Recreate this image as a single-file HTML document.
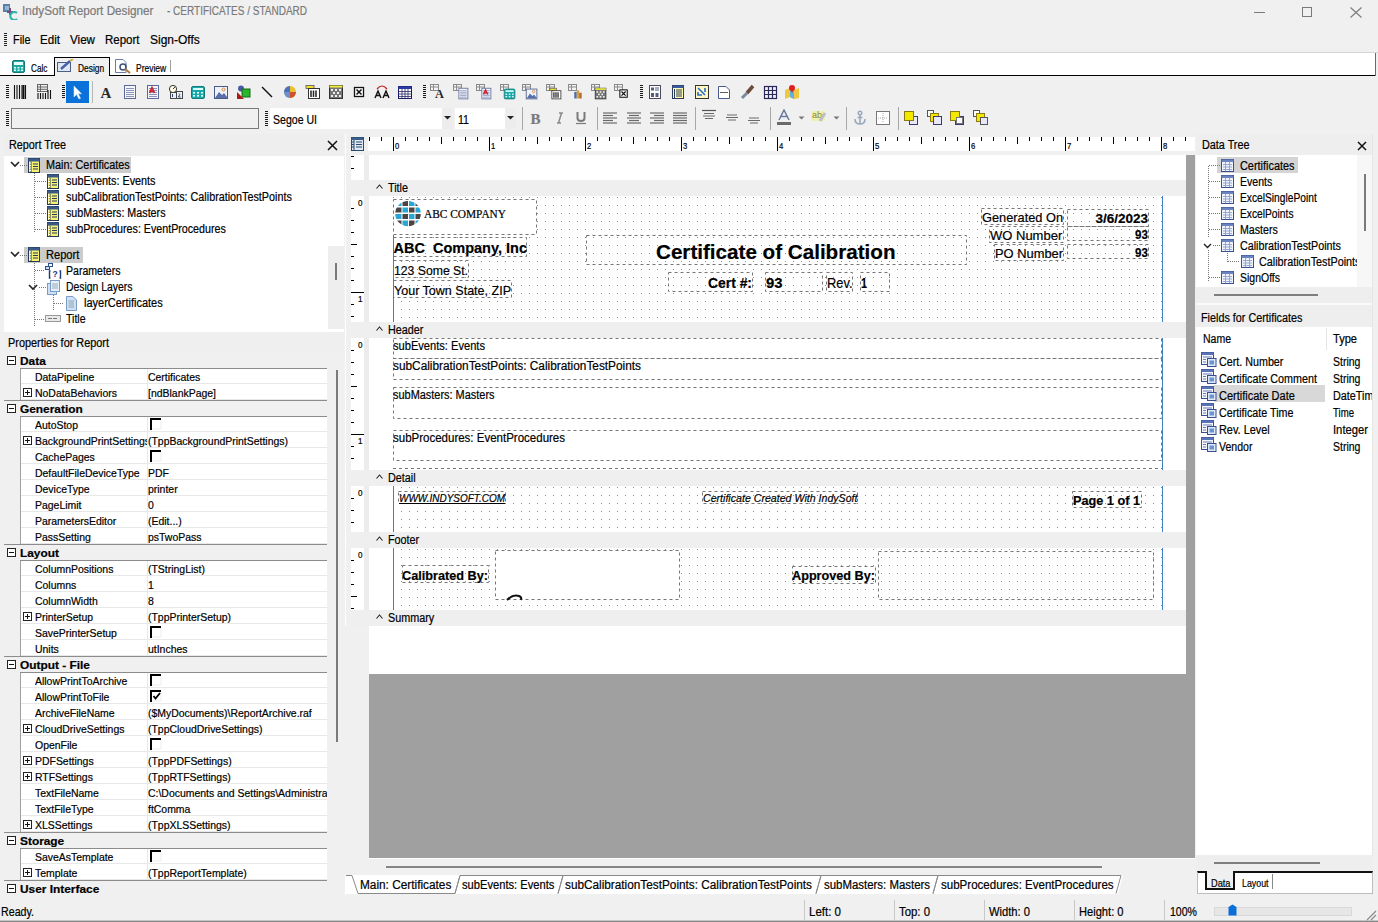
<!DOCTYPE html><html><head><meta charset="utf-8"><title>IndySoft Report Designer</title><style>*{margin:0;padding:0}
html,body{width:1378px;height:922px;overflow:hidden;background:#f0f0f0;font-family:"Liberation Sans",sans-serif;color:#000}
.a{position:absolute;display:block}
.t{position:absolute;white-space:pre;line-height:1;transform-origin:0 0;-webkit-text-stroke:0.2px currentColor}
</style></head><body>
<div class="a" style="left:0px;top:0px;width:1378px;height:30px;background:#f0f0f0;"></div>
<svg class="a" style="left:2px;top:3px;" width="16" height="17" viewBox="0 0 16 17"><rect x="1" y="1" width="7" height="8" fill="#5a7fa8"/><rect x="3" y="3" width="4" height="4" fill="#9bb4d0"/><path d="M8 5 L8 12 M5 9 L11 9" stroke="#7a4a7a" stroke-width="2"/><path d="M15 10 A4 4 0 1 0 15 16" stroke="#2bb3b0" stroke-width="2.2" fill="none"/></svg>
<div class="t" style="left:22.00px;top:5.34px;font-size:12.00px;color:#7a7a7a;transform:scaleX(0.9760);">IndySoft Report Designer</div>
<div class="t" style="left:167.00px;top:5.34px;font-size:12.00px;color:#7a7a7a;transform:scaleX(0.8333);">- CERTIFICATES / STANDARD</div>
<div class="a" style="left:1254px;top:12px;width:11px;height:1px;background:#7a7a7a;"></div>
<div class="a" style="left:1302px;top:7px;width:10px;height:10px;border:1px solid #7a7a7a;box-sizing:border-box;"></div>
<svg class="a" style="left:1350px;top:7px;" width="12" height="11" viewBox="0 0 12 11"><path d="M0.5 0.5 L11.5 10.5 M11.5 0.5 L0.5 10.5" stroke="#7a7a7a" stroke-width="1.1"/></svg>
<div class="a" style="left:4px;top:33px;width:3px;height:13px;background:repeating-linear-gradient(#222 0 1px,transparent 1px 2px);"></div>
<div class="t" style="left:12.50px;top:34.04px;font-size:12.00px;color:#000;transform:scaleX(0.9050);">File</div>
<div class="t" style="left:40.00px;top:34.04px;font-size:12.00px;color:#000;transform:scaleX(0.9672);">Edit</div>
<div class="t" style="left:70.00px;top:34.04px;font-size:12.00px;color:#000;transform:scaleX(0.9692);">View</div>
<div class="t" style="left:105.00px;top:34.04px;font-size:12.00px;color:#000;transform:scaleX(0.9579);">Report</div>
<div class="t" style="left:150.00px;top:34.04px;font-size:12.00px;color:#000;">Sign-Offs</div>
<div class="a" style="left:0px;top:52px;width:1378px;height:1px;background:#d5d5d5;"></div>
<div class="a" style="left:0px;top:53px;width:1378px;height:22px;background:#ffffff;"></div>
<div class="a" style="left:0px;top:75px;width:55px;height:1px;background:#000;"></div>
<div class="a" style="left:109px;top:75px;width:1266px;height:1px;background:#000;"></div>
<div class="a" style="left:1375px;top:53px;width:1px;height:23px;background:#6a6a6a;"></div>
<div class="a" style="left:1376px;top:53px;width:2px;height:23px;background:#f0f0f0;"></div>
<div class="a" style="left:54px;top:57px;width:56px;height:19px;background:#f0f0f0;border:1.5px solid #000;border-bottom:none;box-sizing:border-box;"></div>
<svg class="a" style="left:12px;top:60px;" width="13" height="13" viewBox="0 0 13 13"><rect x="0.5" y="0.5" width="12" height="12" rx="1.5" fill="#1fa7a2" stroke="#147a76"/><rect x="2" y="2" width="9" height="3" fill="#e8ffff"/><g fill="#e8ffff"><rect x="2" y="7" width="2" height="1.5"/><rect x="5.5" y="7" width="2" height="1.5"/><rect x="9" y="7" width="2" height="1.5"/><rect x="2" y="9.5" width="2" height="1.5"/><rect x="5.5" y="9.5" width="2" height="1.5"/><rect x="9" y="9.5" width="2" height="1.5"/></g></svg>
<div class="t" style="left:31.30px;top:62.71px;font-size:10.50px;color:#000;transform:scaleX(0.7808);">Calc</div>
<svg class="a" style="left:57px;top:59px;" width="17" height="14" viewBox="0 0 17 14"><rect x="0.5" y="3.5" width="13" height="9" fill="#dfe7f2" stroke="#4a5f86"/><path d="M4 10 L13 2" stroke="#4a60a8" stroke-width="2.5"/><path d="M13 2 L16 0" stroke="#c8b040" stroke-width="2"/></svg>
<div class="t" style="left:78.40px;top:62.71px;font-size:10.50px;color:#000;transform:scaleX(0.7985);">Design</div>
<svg class="a" style="left:115px;top:59px;" width="16" height="15" viewBox="0 0 16 15"><path d="M0.5 0.5 H8 L11 3.5 V13.5 H0.5 Z" fill="#fff" stroke="#6a7ba5"/><circle cx="8" cy="8" r="3" fill="none" stroke="#3a4f7a" stroke-width="1.5"/><path d="M10 10 L15 14" stroke="#b07a3a" stroke-width="2.2"/></svg>
<div class="t" style="left:135.80px;top:62.71px;font-size:10.50px;color:#000;transform:scaleX(0.8060);">Preview</div>
<div class="a" style="left:170px;top:60px;width:1px;height:12px;background:#a0a0a0;"></div>
<div class="a" style="left:0px;top:76px;width:1378px;height:58px;background:#f0f0f0;"></div>
<div class="a" style="left:6px;top:85px;width:3px;height:13px;background:repeating-linear-gradient(#1a1a1a 0 1px,transparent 1px 2px);"></div>
<svg class="a" style="left:13px;top:84px;" width="16" height="16" viewBox="0 0 16 16"><path d="M1.5 1 V15 M4 1 V15 M6.5 1 V15 M9 1 V15 M12.5 1 V15" stroke="#111" stroke-width="1.1"/><path d="M10.5 1 V15" stroke="#111" stroke-width="2"/></svg>
<svg class="a" style="left:37px;top:84px;" width="16" height="16" viewBox="0 0 16 16"><rect x="0.5" y="0.5" width="10" height="7" fill="none" stroke="#666"/><path d="M0.5 3 H10.5 M0.5 5.3 H10.5 M3.5 0.5 V7.5" stroke="#666"/><path d="M1 9 V15 M3.5 9 V15 M6 9 V15 M8.5 9 V15 M11 6 V15 M13.5 6 V15" stroke="#111" stroke-width="1.1"/></svg>
<div class="a" style="left:62px;top:85px;width:3px;height:13px;background:repeating-linear-gradient(#1a1a1a 0 1px,transparent 1px 2px);"></div>
<div class="a" style="left:66px;top:81px;width:23px;height:22px;background:#0a72d8;"></div>
<svg class="a" style="left:69px;top:84px;" width="16" height="16" viewBox="0 0 16 16"><path d="M5 2 L5 13 L7.5 10.5 L10 15 L11.5 14.3 L9.2 9.8 L12.5 9.8 Z" fill="#fff" stroke="#cfe3ff" stroke-width="0.6"/></svg>
<div class="a" style="left:92px;top:81px;width:1px;height:22px;background:#b8b8b8;"></div>
<svg class="a" style="left:98px;top:84px;" width="16" height="16" viewBox="0 0 16 16"><text x="8" y="13.5" text-anchor="middle" font-family="Liberation Serif" font-weight="bold" font-size="15" fill="#2a2a2a">A</text></svg>
<svg class="a" style="left:121px;top:84px;" width="16" height="16" viewBox="0 0 16 16"><rect x="3.5" y="1.5" width="11" height="13" fill="#f4f6fb" stroke="#5a6a9a"/><path d="M5 4.5 H13 M5 6.5 H13 M5 8.5 H13 M5 10.5 H13 M5 12.5 H13" stroke="#8a94b8"/></svg>
<svg class="a" style="left:144px;top:84px;" width="16" height="16" viewBox="0 0 16 16"><rect x="3.5" y="1.5" width="11" height="13" fill="#f4f6fb" stroke="#5a6a9a"/><path d="M5 4.5 H13 M5 6.5 H13 M5 8.5 H13 M5 10.5 H13 M5 12.5 H13" stroke="#8a94b8"/><path d="M5.5 9 L8 3.5 L10.5 9 M6.5 7.2 H9.5" stroke="#d02030" stroke-width="1.6" fill="none"/></svg>
<svg class="a" style="left:168px;top:84px;" width="16" height="16" viewBox="0 0 16 16"><circle cx="5" cy="5" r="3.6" fill="#fffbe6" stroke="#333"/><path d="M5 5 L7 3" stroke="#333"/><rect x="2.5" y="8.5" width="6" height="6" fill="#eef2f8" stroke="#444"/><rect x="8.5" y="7.5" width="6" height="7" fill="#eef2f8" stroke="#444"/><path d="M4.5 10 V13 M11 9.5 Q12.5 10 11 12 L10.5 13 H12.5" stroke="#2a3f7a" fill="none"/></svg>
<svg class="a" style="left:190px;top:84px;" width="16" height="16" viewBox="0 0 16 16"><rect x="1.5" y="2.5" width="13" height="12" rx="1.5" fill="#1aa9a8" stroke="#137a7a"/><rect x="3" y="4" width="10" height="2" fill="#d8ffff"/><g fill="#e0ffff"><rect x="3" y="8" width="2" height="1.6"/><rect x="7" y="8" width="2" height="1.6"/><rect x="11" y="8" width="2" height="1.6"/><rect x="3" y="11" width="2" height="1.6"/><rect x="7" y="11" width="2" height="1.6"/><rect x="11" y="11" width="2" height="1.6"/></g></svg>
<svg class="a" style="left:213px;top:84px;" width="16" height="16" viewBox="0 0 16 16"><rect x="1.5" y="2.5" width="13" height="12" fill="#eef3fa" stroke="#4a5a8a"/><path d="M2 14 L6 8 L9 11 L11 9 L14 13 V14 Z" fill="#5a6fa8"/><circle cx="10.5" cy="5.5" r="1.5" fill="none" stroke="#d9883a"/></svg>
<svg class="a" style="left:236px;top:84px;" width="16" height="16" viewBox="0 0 16 16"><circle cx="5" cy="4.5" r="3" fill="#4a5aa8"/><rect x="6" y="5" width="8" height="8" fill="#2bb52b" stroke="#176a17"/><path d="M1 8 V15 H8 Z" fill="#b01818"/></svg>
<svg class="a" style="left:259px;top:84px;" width="16" height="16" viewBox="0 0 16 16"><path d="M3 3 L13 13" stroke="#111" stroke-width="1.4"/></svg>
<svg class="a" style="left:282px;top:84px;" width="16" height="16" viewBox="0 0 16 16"><circle cx="8" cy="8" r="6" fill="#e8c030"/><path d="M8 8 V2 A6 6 0 0 0 2 8 Z" fill="#4a70c0"/><path d="M8 8 H2 A6 6 0 0 0 8 14 Z" fill="#6a90d0"/><path d="M8 8 L14 8 A6 6 0 0 1 8 14Z" fill="#d05030"/></svg>
<svg class="a" style="left:305px;top:84px;" width="16" height="16" viewBox="0 0 16 16"><rect x="1" y="1.5" width="8" height="3" fill="#f0e030" stroke="#555" stroke-width="0.8"/><rect x="3.5" y="4.5" width="11" height="10" fill="#fff" stroke="#333"/><path d="M6 6.5 V13 M8.5 6.5 V13 M11 6.5 V13" stroke="#222" stroke-width="1.5"/></svg>
<svg class="a" style="left:328px;top:84px;" width="16" height="16" viewBox="0 0 16 16"><rect x="1.5" y="1.5" width="13" height="13" fill="#777" stroke="#333"/><rect x="1.5" y="1.5" width="13" height="2" fill="#f0f040"/><g fill="#eee"><rect x="3" y="5" width="2" height="2"/><rect x="7" y="5" width="2" height="2"/><rect x="11" y="5" width="2" height="2"/><rect x="5" y="8" width="2" height="2"/><rect x="9" y="8" width="2" height="2"/><rect x="3" y="11" width="2" height="2"/><rect x="7" y="11" width="2" height="2"/><rect x="11" y="11" width="2" height="2"/></g></svg>
<svg class="a" style="left:351px;top:84px;" width="16" height="16" viewBox="0 0 16 16"><rect x="3.5" y="3.5" width="9" height="9" fill="#fff" stroke="#111" stroke-width="1.3"/><path d="M5.5 5.5 L10.5 10.5 M10.5 5.5 L5.5 10.5" stroke="#111" stroke-width="1.5"/></svg>
<svg class="a" style="left:374px;top:84px;" width="16" height="16" viewBox="0 0 16 16"><path d="M3 5 Q8 -1 13 5" stroke="#c02020" fill="none" stroke-width="1.2"/><path d="M1 14 L4 7 L7 14 M2.2 11.5 H5.8 M9 14 L12 7 L15 14 M10.2 11.5 H13.8" stroke="#111" stroke-width="1.4" fill="none"/></svg>
<svg class="a" style="left:397px;top:84px;" width="16" height="16" viewBox="0 0 16 16"><rect x="1.5" y="2.5" width="13" height="12" fill="#fff" stroke="#1a1a6a"/><rect x="1.5" y="2.5" width="13" height="2.5" fill="#2a3aa8"/><path d="M2 7.5 H14 M2 10 H14 M2 12.5 H14 M5 5 V14 M8 5 V14 M11 5 V14" stroke="#2a2a6a" stroke-width="0.8"/></svg>
<div class="a" style="left:423px;top:85px;width:3px;height:13px;background:repeating-linear-gradient(#1a1a1a 0 1px,transparent 1px 2px);"></div>
<svg class="a" style="left:430px;top:84px;" width="16" height="16" viewBox="0 0 16 16"><rect x="0.5" y="0.5" width="8" height="6" fill="#f4f4f4" stroke="#8a8a8a"/><path d="M0.5 3 H8.5 M3.5 0.5 V6.5" stroke="#8a8a8a"/><g transform="translate(3 3) scale(0.82)"><text x="8" y="13.5" text-anchor="middle" font-family="Liberation Serif" font-weight="bold" font-size="15" fill="#2a2a2a">A</text></g></svg>
<svg class="a" style="left:453px;top:84px;" width="16" height="16" viewBox="0 0 16 16"><rect x="0.5" y="0.5" width="8" height="6" fill="#f4f4f4" stroke="#8a8a8a"/><path d="M0.5 3 H8.5 M3.5 0.5 V6.5" stroke="#8a8a8a"/><g transform="translate(3 3) scale(0.82)"><rect x="3.5" y="1.5" width="11" height="13" fill="#f4f6fb" stroke="#5a6a9a"/><path d="M5 4.5 H13 M5 6.5 H13 M5 8.5 H13 M5 10.5 H13 M5 12.5 H13" stroke="#8a94b8"/></g></svg>
<svg class="a" style="left:476px;top:84px;" width="16" height="16" viewBox="0 0 16 16"><rect x="0.5" y="0.5" width="8" height="6" fill="#f4f4f4" stroke="#8a8a8a"/><path d="M0.5 3 H8.5 M3.5 0.5 V6.5" stroke="#8a8a8a"/><g transform="translate(3 3) scale(0.82)"><rect x="3.5" y="1.5" width="11" height="13" fill="#f4f6fb" stroke="#5a6a9a"/><path d="M5 4.5 H13 M5 6.5 H13 M5 8.5 H13 M5 10.5 H13 M5 12.5 H13" stroke="#8a94b8"/><path d="M5.5 9 L8 3.5 L10.5 9 M6.5 7.2 H9.5" stroke="#d02030" stroke-width="1.6" fill="none"/></g></svg>
<svg class="a" style="left:500px;top:84px;" width="16" height="16" viewBox="0 0 16 16"><rect x="0.5" y="0.5" width="8" height="6" fill="#f4f4f4" stroke="#8a8a8a"/><path d="M0.5 3 H8.5 M3.5 0.5 V6.5" stroke="#8a8a8a"/><g transform="translate(3 3) scale(0.82)"><rect x="1.5" y="2.5" width="13" height="12" rx="1.5" fill="#1aa9a8" stroke="#137a7a"/><rect x="3" y="4" width="10" height="2" fill="#d8ffff"/><g fill="#e0ffff"><rect x="3" y="8" width="2" height="1.6"/><rect x="7" y="8" width="2" height="1.6"/><rect x="11" y="8" width="2" height="1.6"/><rect x="3" y="11" width="2" height="1.6"/><rect x="7" y="11" width="2" height="1.6"/><rect x="11" y="11" width="2" height="1.6"/></g></g></svg>
<svg class="a" style="left:522px;top:84px;" width="16" height="16" viewBox="0 0 16 16"><rect x="0.5" y="0.5" width="8" height="6" fill="#f4f4f4" stroke="#8a8a8a"/><path d="M0.5 3 H8.5 M3.5 0.5 V6.5" stroke="#8a8a8a"/><g transform="translate(3 3) scale(0.82)"><rect x="1.5" y="2.5" width="13" height="12" fill="#eef3fa" stroke="#4a5a8a"/><path d="M2 14 L6 8 L9 11 L11 9 L14 13 V14 Z" fill="#5a6fa8"/><circle cx="10.5" cy="5.5" r="1.5" fill="none" stroke="#d9883a"/></g></svg>
<svg class="a" style="left:546px;top:84px;" width="16" height="16" viewBox="0 0 16 16"><rect x="0.5" y="0.5" width="8" height="6" fill="#f4f4f4" stroke="#8a8a8a"/><path d="M0.5 3 H8.5 M3.5 0.5 V6.5" stroke="#8a8a8a"/><g transform="translate(3 3) scale(0.82)"><rect x="1" y="1.5" width="8" height="3" fill="#f0e030" stroke="#555" stroke-width="0.8"/><rect x="3.5" y="4.5" width="11" height="10" fill="#fff" stroke="#333"/><path d="M6 6.5 V13 M8.5 6.5 V13 M11 6.5 V13" stroke="#222" stroke-width="1.5"/></g></svg>
<svg class="a" style="left:568px;top:84px;" width="16" height="16" viewBox="0 0 16 16"><rect x="0.5" y="0.5" width="8" height="6" fill="#f4f4f4" stroke="#8a8a8a"/><path d="M0.5 3 H8.5 M3.5 0.5 V6.5" stroke="#8a8a8a"/><g transform="translate(3 3) scale(0.82)"><rect x="4" y="6" width="3" height="8" fill="#4a6ab0"/><rect x="7" y="4" width="3" height="10" fill="#d9a040"/><rect x="10" y="7" width="3" height="7" fill="#b06a2a"/></g></svg>
<svg class="a" style="left:591px;top:84px;" width="16" height="16" viewBox="0 0 16 16"><rect x="0.5" y="0.5" width="8" height="6" fill="#f4f4f4" stroke="#8a8a8a"/><path d="M0.5 3 H8.5 M3.5 0.5 V6.5" stroke="#8a8a8a"/><g transform="translate(3 3) scale(0.82)"><rect x="1.5" y="1.5" width="13" height="13" fill="#777" stroke="#333"/><rect x="1.5" y="1.5" width="13" height="2" fill="#f0f040"/><g fill="#eee"><rect x="3" y="5" width="2" height="2"/><rect x="7" y="5" width="2" height="2"/><rect x="11" y="5" width="2" height="2"/><rect x="5" y="8" width="2" height="2"/><rect x="9" y="8" width="2" height="2"/><rect x="3" y="11" width="2" height="2"/><rect x="7" y="11" width="2" height="2"/><rect x="11" y="11" width="2" height="2"/></g></g></svg>
<svg class="a" style="left:614px;top:84px;" width="16" height="16" viewBox="0 0 16 16"><rect x="0.5" y="0.5" width="8" height="6" fill="#f4f4f4" stroke="#8a8a8a"/><path d="M0.5 3 H8.5 M3.5 0.5 V6.5" stroke="#8a8a8a"/><g transform="translate(3 3) scale(0.82)"><rect x="3.5" y="3.5" width="9" height="9" fill="#fff" stroke="#111" stroke-width="1.3"/><path d="M5.5 5.5 L10.5 10.5 M10.5 5.5 L5.5 10.5" stroke="#111" stroke-width="1.5"/></g></svg>
<div class="a" style="left:640px;top:85px;width:3px;height:13px;background:repeating-linear-gradient(#1a1a1a 0 1px,transparent 1px 2px);"></div>
<svg class="a" style="left:647px;top:84px;" width="16" height="16" viewBox="0 0 16 16"><rect x="2.5" y="1.5" width="11" height="13" fill="#fff" stroke="#4a4a5a"/><rect x="4" y="3.5" width="3" height="3" fill="#55607a"/><path d="M8 4 H12 M8 6 H12" stroke="#55607a"/><rect x="4" y="9" width="3" height="4" fill="#55607a"/><rect x="8.5" y="9" width="3" height="4" fill="#55607a"/></svg>
<svg class="a" style="left:670px;top:84px;" width="16" height="16" viewBox="0 0 16 16"><rect x="2.5" y="1.5" width="11" height="13" fill="#fffbb0" stroke="#2a3a5a"/><rect x="2.5" y="1.5" width="11" height="2.5" fill="#3a5aa0"/><path d="M6 6 H12 M6 8 H12 M6 10 H12 M6 12 H12" stroke="#2a3a5a"/><path d="M4.5 5 V14" stroke="#2a3a5a"/></svg>
<svg class="a" style="left:694px;top:84px;" width="16" height="16" viewBox="0 0 16 16"><rect x="1.5" y="1.5" width="13" height="13" fill="#fff8c0" stroke="#333"/><path d="M4 4 L11 11" stroke="#2a6ad0" stroke-width="1.6"/><path d="M11 4 V8 M4 8 V11 H8" stroke="#2a6ad0" stroke-width="1.6" fill="none"/></svg>
<svg class="a" style="left:716px;top:84px;" width="16" height="16" viewBox="0 0 16 16"><path d="M2.5 2.5 H10 L13.5 6 V14.5 H2.5 Z" fill="#fff" stroke="#4a5a8a"/><path d="M4 9 L5 8 L6 9 L7 8 L8 9 L9 8 L10 9 L11 8 L12 9" stroke="#333" fill="none" stroke-width="0.8"/></svg>
<svg class="a" style="left:740px;top:84px;" width="16" height="16" viewBox="0 0 16 16"><path d="M2 14 L7 9" stroke="#7a8aa0" stroke-width="3"/><path d="M7 9 L13 2" stroke="#6a4a3a" stroke-width="3.5"/></svg>
<svg class="a" style="left:762px;top:84px;" width="16" height="16" viewBox="0 0 16 16"><rect x="2.5" y="2.5" width="12" height="12" fill="none" stroke="#2a2a5a" stroke-width="1.2"/><path d="M6.5 2.5 V14.5 M10.5 2.5 V14.5 M2.5 6.5 H14.5 M2.5 10.5 H14.5" stroke="#2a2a5a" stroke-width="1.2"/></svg>
<svg class="a" style="left:784px;top:84px;" width="16" height="16" viewBox="0 0 16 16"><path d="M1 6 L6 4 L10 6 L15 4 V14 L10 15 L6 13 L1 15 Z" fill="#f0c840"/><path d="M6 4 V13 L10 15 V6Z" fill="#60b0e0"/><circle cx="8" cy="4" r="3" fill="#e02020"/><path d="M6 5 L8 9 L10 5" fill="#e02020"/></svg>
<div class="a" style="left:6px;top:111px;width:3px;height:15px;background:repeating-linear-gradient(#1a1a1a 0 1px,transparent 1px 2px);"></div>
<div class="a" style="left:11px;top:108px;width:248px;height:21px;background:#f0f0f0;border:1px solid #7a7a7a;box-sizing:border-box;"></div>
<div class="a" style="left:265px;top:111px;width:3px;height:15px;background:repeating-linear-gradient(#1a1a1a 0 1px,transparent 1px 2px);"></div>
<div class="a" style="left:270px;top:108px;width:183px;height:21px;background:#ffffff;"></div>
<div class="a" style="left:442px;top:108px;width:11px;height:21px;background:#ededed;"></div>
<svg class="a" style="left:443px;top:115px;" width="9" height="6" viewBox="0 0 9 6"><path d="M1 1 H8 L4.5 4.5 Z" fill="#222"/></svg>
<div class="t" style="left:273.40px;top:113.54px;font-size:12.00px;transform:scaleX(0.8794);">Segoe UI</div>
<div class="a" style="left:455px;top:108px;width:61px;height:21px;background:#ffffff;"></div>
<div class="a" style="left:505px;top:108px;width:11px;height:21px;background:#ededed;"></div>
<svg class="a" style="left:506px;top:115px;" width="9" height="6" viewBox="0 0 9 6"><path d="M1 1 H8 L4.5 4.5 Z" fill="#222"/></svg>
<div class="t" style="left:458.00px;top:113.54px;font-size:12.00px;transform:scaleX(0.8830);">11</div>
<div class="a" style="left:522px;top:107px;width:1px;height:23px;background:#a8a8a8;"></div>
<div class="a" style="left:597px;top:107px;width:1px;height:23px;background:#a8a8a8;"></div>
<div class="a" style="left:695px;top:107px;width:1px;height:23px;background:#a8a8a8;"></div>
<div class="a" style="left:770px;top:107px;width:1px;height:23px;background:#a8a8a8;"></div>
<div class="a" style="left:846px;top:107px;width:1px;height:23px;background:#a8a8a8;"></div>
<div class="a" style="left:898px;top:107px;width:1px;height:23px;background:#a8a8a8;"></div>
<div class="t" style="left:530.50px;top:112.00px;font-size:15.00px;font-weight:bold;font-family:'Liberation Serif',serif;color:#7a7a7a;">B</div>
<svg class="a" style="left:553px;top:110px;" width="14" height="16" viewBox="0 0 14 16"><path d="M6 3 H10 M4 13 H8 M8.5 3 L5.5 13" stroke="#8a8a8a" stroke-width="1.5"/></svg>
<svg class="a" style="left:574px;top:109px;" width="14" height="17" viewBox="0 0 14 17"><path d="M3.5 3 V9 Q3.5 12 7 12 Q10.5 12 10.5 9 V3" stroke="#7a7a7a" stroke-width="2" fill="none"/><path d="M2 14.5 H12" stroke="#7a7a7a" stroke-width="1.2"/></svg>
<svg class="a" style="left:602px;top:110px;" width="16" height="16" viewBox="0 0 16 16"><path d="M1 3.0 H15" stroke="#6a6a6a" stroke-width="1.2"/><path d="M1 5.5 H11" stroke="#6a6a6a" stroke-width="1.2"/><path d="M1 8.0 H15" stroke="#6a6a6a" stroke-width="1.2"/><path d="M1 10.5 H11" stroke="#6a6a6a" stroke-width="1.2"/><path d="M1 13.0 H15" stroke="#6a6a6a" stroke-width="1.2"/></svg>
<svg class="a" style="left:626px;top:110px;" width="16" height="16" viewBox="0 0 16 16"><path d="M1 3.0 H15" stroke="#6a6a6a" stroke-width="1.2"/><path d="M3 5.5 H13" stroke="#6a6a6a" stroke-width="1.2"/><path d="M1 8.0 H15" stroke="#6a6a6a" stroke-width="1.2"/><path d="M3 10.5 H13" stroke="#6a6a6a" stroke-width="1.2"/><path d="M1 13.0 H15" stroke="#6a6a6a" stroke-width="1.2"/></svg>
<svg class="a" style="left:649px;top:110px;" width="16" height="16" viewBox="0 0 16 16"><path d="M1 3.0 H15" stroke="#6a6a6a" stroke-width="1.2"/><path d="M5 5.5 H15" stroke="#6a6a6a" stroke-width="1.2"/><path d="M1 8.0 H15" stroke="#6a6a6a" stroke-width="1.2"/><path d="M5 10.5 H15" stroke="#6a6a6a" stroke-width="1.2"/><path d="M1 13.0 H15" stroke="#6a6a6a" stroke-width="1.2"/></svg>
<svg class="a" style="left:672px;top:110px;" width="16" height="16" viewBox="0 0 16 16"><path d="M1 3.0 H15" stroke="#6a6a6a" stroke-width="1.2"/><path d="M1 5.5 H15" stroke="#6a6a6a" stroke-width="1.2"/><path d="M1 8.0 H15" stroke="#6a6a6a" stroke-width="1.2"/><path d="M1 10.5 H15" stroke="#6a6a6a" stroke-width="1.2"/><path d="M1 13.0 H15" stroke="#6a6a6a" stroke-width="1.2"/></svg>
<svg class="a" style="left:701px;top:109px;" width="16" height="16" viewBox="0 0 16 16"><path d="M1 1.5 H15" stroke="#555" stroke-width="1.2"/><path d="M3 4.5 H13 M2 7 H14 M4 9.5 H12" stroke="#6a6a6a" stroke-width="1.2"/></svg>
<svg class="a" style="left:724px;top:109px;" width="16" height="16" viewBox="0 0 16 16"><path d="M3 6 H13 M2 8.5 H14 M4 11 H12" stroke="#6a6a6a" stroke-width="1.2"/></svg>
<svg class="a" style="left:746px;top:109px;" width="16" height="16" viewBox="0 0 16 16"><path d="M3 9 H13 M2 11.5 H14 M4 14 H12" stroke="#6a6a6a" stroke-width="1.2"/></svg>
<svg class="a" style="left:776px;top:109px;" width="16" height="17" viewBox="0 0 16 17"><path d="M3 11 L8 1 L13 11 M5 7.5 H11" stroke="#6a7aa0" stroke-width="1.5" fill="none"/><rect x="1" y="13" width="14" height="3" fill="#6a6a6a"/></svg>
<svg class="a" style="left:798px;top:116px;" width="8" height="5" viewBox="0 0 8 5"><path d="M0.5 0.5 H6.5 L3.5 3.5 Z" fill="#777"/></svg>
<svg class="a" style="left:810px;top:109px;" width="17" height="16" viewBox="0 0 17 16"><rect x="1" y="2" width="14" height="10" fill="#f0f0a0" opacity="0.8"/><text x="2" y="9" font-size="9" fill="#8a8a30" font-family="Liberation Sans">ab</text><path d="M10 12 L15 4" stroke="#b8c0d0" stroke-width="3"/></svg>
<svg class="a" style="left:833px;top:116px;" width="8" height="5" viewBox="0 0 8 5"><path d="M0.5 0.5 H6.5 L3.5 3.5 Z" fill="#777"/></svg>
<svg class="a" style="left:852px;top:110px;" width="16" height="16" viewBox="0 0 16 16"><circle cx="8" cy="3" r="1.8" fill="none" stroke="#9aa8bc" stroke-width="1.4"/><path d="M8 5 V14 M3 9 Q3 14 8 14 Q13 14 13 9 M5.5 7.5 H10.5" stroke="#9aa8bc" stroke-width="1.6" fill="none"/></svg>
<svg class="a" style="left:875px;top:110px;" width="16" height="16" viewBox="0 0 16 16"><rect x="1.5" y="1.5" width="13" height="13" fill="#fff" stroke="#777"/><path d="M8 3 V13 M3 8 H13" stroke="#aaa" stroke-dasharray="1 1"/></svg>
<svg class="a" style="left:903px;top:110px;" width="16" height="16" viewBox="0 0 16 16"><rect x="6.5" y="6.5" width="8" height="8" fill="#e8e8f8" stroke="#3a3a6a"/><rect x="1.5" y="1.5" width="9" height="9" fill="#f2e800" stroke="#8a7a10"/></svg>
<svg class="a" style="left:927px;top:110px;" width="16" height="16" viewBox="0 0 16 16"><rect x="0.5" y="0.5" width="6" height="6" fill="#fff" stroke="#555"/><rect x="3.5" y="3.5" width="8" height="8" fill="#f2e800" stroke="#8a7a10"/><rect x="6.5" y="6.5" width="8" height="8" fill="#e8e8f8" stroke="#3a3a6a"/></svg>
<svg class="a" style="left:949px;top:110px;" width="16" height="16" viewBox="0 0 16 16"><rect x="6.5" y="6.5" width="8" height="8" fill="#e8e8f8" stroke="#3a3a6a"/><rect x="1.5" y="1.5" width="9" height="9" fill="#f2e800" stroke="#8a7a10"/><rect x="7.5" y="7.5" width="6" height="6" fill="#f8f8ff" stroke="#777"/></svg>
<svg class="a" style="left:973px;top:110px;" width="16" height="16" viewBox="0 0 16 16"><rect x="0.5" y="0.5" width="6" height="6" fill="#fff" stroke="#555"/><rect x="3.5" y="3.5" width="8" height="8" fill="#f2e800" stroke="#8a7a10"/><rect x="7.5" y="7.5" width="7" height="7" fill="#e8e8f8" stroke="#555"/></svg>
<div class="a" style="left:4px;top:134px;width:340px;height:22px;background:#eeeeee;"></div>
<div class="t" style="left:8.70px;top:139.24px;font-size:12.00px;transform:scaleX(0.9000);">Report Tree</div>
<svg class="a" style="left:327px;top:140px;" width="11" height="11" viewBox="0 0 11 11"><path d="M1 1 L10 10 M10 1 L1 10" stroke="#111" stroke-width="1.5"/></svg>
<div class="a" style="left:4px;top:156px;width:340px;height:176px;background:#ffffff;"></div>
<div class="a" style="left:24px;top:157px;width:107px;height:16px;background:#cccccc;"></div>
<svg class="a" style="left:10px;top:161px;" width="10" height="7" viewBox="0 0 10 7"><path d="M1 1 L5 5 L9 1" stroke="#222" stroke-width="1.6" fill="none"/></svg>
<div class="a" style="left:20px;top:165px;width:7px;height:1px;background:repeating-linear-gradient(90deg,#777 0 1px,transparent 1px 2px);"></div>
<svg class="a" style="left:28px;top:158px;" width="12" height="15" viewBox="0 0 12 15"><rect x="0.5" y="0.5" width="11" height="14" fill="#f8f070" stroke="#253a5a"/><rect x="0.5" y="0.5" width="11" height="3" fill="#3a5a8a"/><path d="M3 3.5 V14.5" stroke="#253a5a"/><path d="M5 6 H10 M5 8.5 H10 M5 11 H10" stroke="#253a5a" stroke-width="1.2"/><path d="M1 5 H3 M1 7.5 H3 M1 10 H3 M1 12.5 H3" stroke="#fff"/></svg>
<div class="t" style="left:46.20px;top:159.04px;font-size:12.00px;transform:scaleX(0.9040);">Main: Certificates</div>
<div class="a" style="left:34px;top:173px;width:1px;height:60px;background:repeating-linear-gradient(#777 0 1px,transparent 1px 2px);"></div>
<div class="a" style="left:35px;top:181px;width:11px;height:1px;background:repeating-linear-gradient(90deg,#777 0 1px,transparent 1px 2px);"></div>
<svg class="a" style="left:47px;top:174px;" width="12" height="15" viewBox="0 0 12 15"><rect x="0.5" y="0.5" width="11" height="14" fill="#f8f070" stroke="#253a5a"/><rect x="0.5" y="0.5" width="11" height="3" fill="#3a5a8a"/><path d="M3 3.5 V14.5" stroke="#253a5a"/><path d="M5 6 H10 M5 8.5 H10 M5 11 H10" stroke="#253a5a" stroke-width="1.2"/><path d="M1 5 H3 M1 7.5 H3 M1 10 H3 M1 12.5 H3" stroke="#fff"/></svg>
<div class="t" style="left:65.50px;top:175.34px;font-size:12.00px;transform:scaleX(0.9005);">subEvents: Events</div>
<div class="a" style="left:35px;top:197px;width:11px;height:1px;background:repeating-linear-gradient(90deg,#777 0 1px,transparent 1px 2px);"></div>
<svg class="a" style="left:47px;top:190px;" width="12" height="15" viewBox="0 0 12 15"><rect x="0.5" y="0.5" width="11" height="14" fill="#f8f070" stroke="#253a5a"/><rect x="0.5" y="0.5" width="11" height="3" fill="#3a5a8a"/><path d="M3 3.5 V14.5" stroke="#253a5a"/><path d="M5 6 H10 M5 8.5 H10 M5 11 H10" stroke="#253a5a" stroke-width="1.2"/><path d="M1 5 H3 M1 7.5 H3 M1 10 H3 M1 12.5 H3" stroke="#fff"/></svg>
<div class="t" style="left:65.50px;top:191.34px;font-size:12.00px;transform:scaleX(0.8979);">subCalibrationTestPoints: CalibrationTestPoints</div>
<div class="a" style="left:35px;top:213px;width:11px;height:1px;background:repeating-linear-gradient(90deg,#777 0 1px,transparent 1px 2px);"></div>
<svg class="a" style="left:47px;top:206px;" width="12" height="15" viewBox="0 0 12 15"><rect x="0.5" y="0.5" width="11" height="14" fill="#f8f070" stroke="#253a5a"/><rect x="0.5" y="0.5" width="11" height="3" fill="#3a5a8a"/><path d="M3 3.5 V14.5" stroke="#253a5a"/><path d="M5 6 H10 M5 8.5 H10 M5 11 H10" stroke="#253a5a" stroke-width="1.2"/><path d="M1 5 H3 M1 7.5 H3 M1 10 H3 M1 12.5 H3" stroke="#fff"/></svg>
<div class="t" style="left:65.50px;top:207.34px;font-size:12.00px;transform:scaleX(0.8935);">subMasters: Masters</div>
<div class="a" style="left:35px;top:229px;width:11px;height:1px;background:repeating-linear-gradient(90deg,#777 0 1px,transparent 1px 2px);"></div>
<svg class="a" style="left:47px;top:222px;" width="12" height="15" viewBox="0 0 12 15"><rect x="0.5" y="0.5" width="11" height="14" fill="#f8f070" stroke="#253a5a"/><rect x="0.5" y="0.5" width="11" height="3" fill="#3a5a8a"/><path d="M3 3.5 V14.5" stroke="#253a5a"/><path d="M5 6 H10 M5 8.5 H10 M5 11 H10" stroke="#253a5a" stroke-width="1.2"/><path d="M1 5 H3 M1 7.5 H3 M1 10 H3 M1 12.5 H3" stroke="#fff"/></svg>
<div class="t" style="left:65.50px;top:223.34px;font-size:12.00px;transform:scaleX(0.8906);">subProcedures: EventProcedures</div>
<div class="a" style="left:24px;top:247px;width:59px;height:16px;background:#cccccc;"></div>
<svg class="a" style="left:10px;top:251px;" width="10" height="7" viewBox="0 0 10 7"><path d="M1 1 L5 5 L9 1" stroke="#222" stroke-width="1.6" fill="none"/></svg>
<div class="a" style="left:20px;top:255px;width:7px;height:1px;background:repeating-linear-gradient(90deg,#777 0 1px,transparent 1px 2px);"></div>
<svg class="a" style="left:28px;top:247px;" width="12" height="15" viewBox="0 0 12 15"><rect x="0.5" y="0.5" width="11" height="14" fill="#f8f070" stroke="#253a5a"/><rect x="0.5" y="0.5" width="11" height="3" fill="#3a5a8a"/><path d="M3 3.5 V14.5" stroke="#253a5a"/><path d="M5 6 H10 M5 8.5 H10 M5 11 H10" stroke="#253a5a" stroke-width="1.2"/><path d="M1 5 H3 M1 7.5 H3 M1 10 H3 M1 12.5 H3" stroke="#fff"/></svg>
<div class="t" style="left:46.20px;top:249.04px;font-size:12.00px;transform:scaleX(0.9245);">Report</div>
<div class="a" style="left:34px;top:263px;width:1px;height:63px;background:repeating-linear-gradient(#777 0 1px,transparent 1px 2px);"></div>
<div class="a" style="left:35px;top:270px;width:10px;height:1px;background:repeating-linear-gradient(90deg,#777 0 1px,transparent 1px 2px);"></div>
<svg class="a" style="left:45px;top:263px;" width="17" height="16" viewBox="0 0 17 16"><rect x="3.5" y="0.5" width="4" height="3" fill="#fff" stroke="#2a5090"/><rect x="0.5" y="3.5" width="4" height="3" fill="#cfe0f5" stroke="#2a5090"/><path d="M5.5 8 H4.5 V15 H5.5 M14.5 8 H15.5 V15 H14.5" stroke="#1a3a7a" fill="none" stroke-width="1.4"/><text x="10" y="14" text-anchor="middle" font-size="8.5" font-weight="bold" fill="#1a3a7a" font-family="Liberation Sans">?</text></svg>
<div class="t" style="left:65.50px;top:265.04px;font-size:12.00px;transform:scaleX(0.8787);">Parameters</div>
<svg class="a" style="left:28px;top:284px;" width="10" height="7" viewBox="0 0 10 7"><path d="M1 1 L5 5 L9 1" stroke="#222" stroke-width="1.6" fill="none"/></svg>
<div class="a" style="left:39px;top:287px;width:7px;height:1px;background:repeating-linear-gradient(90deg,#777 0 1px,transparent 1px 2px);"></div>
<svg class="a" style="left:47px;top:280px;" width="13" height="15" viewBox="0 0 13 15"><rect x="0.5" y="3.5" width="9" height="11" fill="#cfe0f5" stroke="#7a9ac8"/><rect x="3.5" y="0.5" width="9" height="11" fill="#e6f0fb" stroke="#7a9ac8"/><path d="M5 4 H11 M5 6 H11 M5 8 H11" stroke="#9ab"/></svg>
<div class="t" style="left:65.50px;top:281.04px;font-size:12.00px;transform:scaleX(0.8670);">Design Layers</div>
<div class="a" style="left:53px;top:295px;width:1px;height:15px;background:repeating-linear-gradient(#777 0 1px,transparent 1px 2px);"></div>
<div class="a" style="left:54px;top:303px;width:10px;height:1px;background:repeating-linear-gradient(90deg,#777 0 1px,transparent 1px 2px);"></div>
<svg class="a" style="left:66px;top:296px;" width="11" height="15" viewBox="0 0 11 15"><path d="M0.5 0.5 H7 L10.5 4 V14.5 H0.5 Z" fill="#cfe0f5" stroke="#7a9ac8"/><path d="M2.5 5 H8 M2.5 7 H8 M2.5 9 H8 M2.5 11 H8" stroke="#8aa"/></svg>
<div class="t" style="left:84.30px;top:297.04px;font-size:12.00px;transform:scaleX(0.9148);">layerCertificates</div>
<div class="a" style="left:35px;top:319px;width:10px;height:1px;background:repeating-linear-gradient(90deg,#777 0 1px,transparent 1px 2px);"></div>
<svg class="a" style="left:45px;top:315px;" width="16" height="8" viewBox="0 0 16 8"><rect x="0.5" y="0.5" width="15" height="6" fill="#e8e8e8" stroke="#999"/><path d="M3 3.5 H7 M8 3.5 H12" stroke="#777"/></svg>
<div class="t" style="left:65.50px;top:313.04px;font-size:12.00px;transform:scaleX(0.8774);">Title</div>
<div class="a" style="left:328px;top:246px;width:16px;height:83px;background:#eeeeee;"></div>
<div class="a" style="left:335px;top:263px;width:2px;height:17px;background:#7a7a7a;"></div>
<div class="a" style="left:4px;top:332px;width:340px;height:20px;background:#efefef;"></div>
<div class="t" style="left:7.50px;top:337.34px;font-size:12.00px;transform:scaleX(0.9068);">Properties for Report</div>
<div class="a" style="left:4px;top:352px;width:324px;height:544px;background:#f0f0f0;"></div>
<svg class="a" style="left:7px;top:356px;" width="10" height="10" viewBox="0 0 10 10"><rect x="0.5" y="0.5" width="8" height="8" fill="#fff" stroke="#222"/><path d="M2 4.5 H7" stroke="#111"/></svg>
<div class="t" style="left:20.30px;top:355.98px;font-size:11.00px;font-weight:bold;transform:scaleX(1.0800);">Data</div>
<div class="a" style="left:21px;top:368px;width:306px;height:16px;background:#ffffff;"></div>
<div class="a" style="left:20px;top:368px;width:1px;height:16px;background:#a0a0a0;"></div>
<div class="a" style="left:21px;top:383px;width:306px;height:1px;background:#e8e8e8;"></div>
<div class="a" style="left:147px;top:368px;width:1px;height:16px;background:#e8e8e8;"></div>
<div class="a" style="left:35px;top:368px;width:112px;height:16px;overflow:hidden"><div class="t" style="left:0.40px;top:4.28px;font-size:11.00px;transform:scaleX(0.9500);">DataPipeline</div></div>
<div class="a" style="left:147px;top:368px;width:180px;height:16px;overflow:hidden"><div class="t" style="left:0.50px;top:4.28px;font-size:11.00px;transform:scaleX(0.9500);">Certificates</div></div>
<div class="a" style="left:21px;top:384px;width:306px;height:16px;background:#ffffff;"></div>
<div class="a" style="left:20px;top:384px;width:1px;height:16px;background:#a0a0a0;"></div>
<div class="a" style="left:21px;top:399px;width:306px;height:1px;background:#e8e8e8;"></div>
<div class="a" style="left:147px;top:384px;width:1px;height:16px;background:#e8e8e8;"></div>
<svg class="a" style="left:23px;top:388px;" width="10" height="10" viewBox="0 0 10 10"><rect x="0.5" y="0.5" width="8" height="8" fill="#fff" stroke="#222"/><path d="M2 4.5 H7 M4.5 2 V7" stroke="#111"/></svg>
<div class="a" style="left:35px;top:384px;width:112px;height:16px;overflow:hidden"><div class="t" style="left:0.40px;top:4.28px;font-size:11.00px;transform:scaleX(0.9500);">NoDataBehaviors</div></div>
<div class="a" style="left:147px;top:384px;width:180px;height:16px;overflow:hidden"><div class="t" style="left:0.50px;top:4.28px;font-size:11.00px;transform:scaleX(0.9500);">[ndBlankPage]</div></div>
<svg class="a" style="left:7px;top:404px;" width="10" height="10" viewBox="0 0 10 10"><rect x="0.5" y="0.5" width="8" height="8" fill="#fff" stroke="#222"/><path d="M2 4.5 H7" stroke="#111"/></svg>
<div class="t" style="left:20.30px;top:403.98px;font-size:11.00px;font-weight:bold;transform:scaleX(1.0800);">Generation</div>
<div class="a" style="left:21px;top:416px;width:306px;height:16px;background:#ffffff;"></div>
<div class="a" style="left:20px;top:416px;width:1px;height:16px;background:#a0a0a0;"></div>
<div class="a" style="left:21px;top:431px;width:306px;height:1px;background:#e8e8e8;"></div>
<div class="a" style="left:147px;top:416px;width:1px;height:16px;background:#e8e8e8;"></div>
<div class="a" style="left:35px;top:416px;width:112px;height:16px;overflow:hidden"><div class="t" style="left:0.40px;top:4.28px;font-size:11.00px;transform:scaleX(0.9500);">AutoStop</div></div>
<svg class="a" style="left:150px;top:418px;" width="12" height="12" viewBox="0 0 12 12"><path d="M1 12 V1 H11" stroke="#000" stroke-width="2" fill="none"/><path d="M2 11 H11 V2" stroke="#eeeeee" fill="none"/></svg>
<div class="a" style="left:21px;top:432px;width:306px;height:16px;background:#ffffff;"></div>
<div class="a" style="left:20px;top:432px;width:1px;height:16px;background:#a0a0a0;"></div>
<div class="a" style="left:21px;top:447px;width:306px;height:1px;background:#e8e8e8;"></div>
<div class="a" style="left:147px;top:432px;width:1px;height:16px;background:#e8e8e8;"></div>
<svg class="a" style="left:23px;top:436px;" width="10" height="10" viewBox="0 0 10 10"><rect x="0.5" y="0.5" width="8" height="8" fill="#fff" stroke="#222"/><path d="M2 4.5 H7 M4.5 2 V7" stroke="#111"/></svg>
<div class="a" style="left:35px;top:432px;width:112px;height:16px;overflow:hidden"><div class="t" style="left:0.40px;top:4.28px;font-size:11.00px;transform:scaleX(0.9500);">BackgroundPrintSettings</div></div>
<div class="a" style="left:147px;top:432px;width:180px;height:16px;overflow:hidden"><div class="t" style="left:0.50px;top:4.28px;font-size:11.00px;transform:scaleX(0.9500);">(TppBackgroundPrintSettings)</div></div>
<div class="a" style="left:21px;top:448px;width:306px;height:16px;background:#ffffff;"></div>
<div class="a" style="left:20px;top:448px;width:1px;height:16px;background:#a0a0a0;"></div>
<div class="a" style="left:21px;top:463px;width:306px;height:1px;background:#e8e8e8;"></div>
<div class="a" style="left:147px;top:448px;width:1px;height:16px;background:#e8e8e8;"></div>
<div class="a" style="left:35px;top:448px;width:112px;height:16px;overflow:hidden"><div class="t" style="left:0.40px;top:4.28px;font-size:11.00px;transform:scaleX(0.9500);">CachePages</div></div>
<svg class="a" style="left:150px;top:450px;" width="12" height="12" viewBox="0 0 12 12"><path d="M1 12 V1 H11" stroke="#000" stroke-width="2" fill="none"/><path d="M2 11 H11 V2" stroke="#eeeeee" fill="none"/></svg>
<div class="a" style="left:21px;top:464px;width:306px;height:16px;background:#ffffff;"></div>
<div class="a" style="left:20px;top:464px;width:1px;height:16px;background:#a0a0a0;"></div>
<div class="a" style="left:21px;top:479px;width:306px;height:1px;background:#e8e8e8;"></div>
<div class="a" style="left:147px;top:464px;width:1px;height:16px;background:#e8e8e8;"></div>
<div class="a" style="left:35px;top:464px;width:112px;height:16px;overflow:hidden"><div class="t" style="left:0.40px;top:4.28px;font-size:11.00px;transform:scaleX(0.9500);">DefaultFileDeviceType</div></div>
<div class="a" style="left:147px;top:464px;width:180px;height:16px;overflow:hidden"><div class="t" style="left:0.50px;top:4.28px;font-size:11.00px;transform:scaleX(0.9500);">PDF</div></div>
<div class="a" style="left:21px;top:480px;width:306px;height:16px;background:#ffffff;"></div>
<div class="a" style="left:20px;top:480px;width:1px;height:16px;background:#a0a0a0;"></div>
<div class="a" style="left:21px;top:495px;width:306px;height:1px;background:#e8e8e8;"></div>
<div class="a" style="left:147px;top:480px;width:1px;height:16px;background:#e8e8e8;"></div>
<div class="a" style="left:35px;top:480px;width:112px;height:16px;overflow:hidden"><div class="t" style="left:0.40px;top:4.28px;font-size:11.00px;transform:scaleX(0.9500);">DeviceType</div></div>
<div class="a" style="left:147px;top:480px;width:180px;height:16px;overflow:hidden"><div class="t" style="left:0.50px;top:4.28px;font-size:11.00px;transform:scaleX(0.9500);">printer</div></div>
<div class="a" style="left:21px;top:496px;width:306px;height:16px;background:#ffffff;"></div>
<div class="a" style="left:20px;top:496px;width:1px;height:16px;background:#a0a0a0;"></div>
<div class="a" style="left:21px;top:511px;width:306px;height:1px;background:#e8e8e8;"></div>
<div class="a" style="left:147px;top:496px;width:1px;height:16px;background:#e8e8e8;"></div>
<div class="a" style="left:35px;top:496px;width:112px;height:16px;overflow:hidden"><div class="t" style="left:0.40px;top:4.28px;font-size:11.00px;transform:scaleX(0.9500);">PageLimit</div></div>
<div class="a" style="left:147px;top:496px;width:180px;height:16px;overflow:hidden"><div class="t" style="left:0.50px;top:4.28px;font-size:11.00px;transform:scaleX(0.9500);">0</div></div>
<div class="a" style="left:21px;top:512px;width:306px;height:16px;background:#ffffff;"></div>
<div class="a" style="left:20px;top:512px;width:1px;height:16px;background:#a0a0a0;"></div>
<div class="a" style="left:21px;top:527px;width:306px;height:1px;background:#e8e8e8;"></div>
<div class="a" style="left:147px;top:512px;width:1px;height:16px;background:#e8e8e8;"></div>
<div class="a" style="left:35px;top:512px;width:112px;height:16px;overflow:hidden"><div class="t" style="left:0.40px;top:4.28px;font-size:11.00px;transform:scaleX(0.9500);">ParametersEditor</div></div>
<div class="a" style="left:147px;top:512px;width:180px;height:16px;overflow:hidden"><div class="t" style="left:0.50px;top:4.28px;font-size:11.00px;transform:scaleX(0.9500);">(Edit...)</div></div>
<div class="a" style="left:21px;top:528px;width:306px;height:16px;background:#ffffff;"></div>
<div class="a" style="left:20px;top:528px;width:1px;height:16px;background:#a0a0a0;"></div>
<div class="a" style="left:21px;top:543px;width:306px;height:1px;background:#e8e8e8;"></div>
<div class="a" style="left:147px;top:528px;width:1px;height:16px;background:#e8e8e8;"></div>
<div class="a" style="left:35px;top:528px;width:112px;height:16px;overflow:hidden"><div class="t" style="left:0.40px;top:4.28px;font-size:11.00px;transform:scaleX(0.9500);">PassSetting</div></div>
<div class="a" style="left:147px;top:528px;width:180px;height:16px;overflow:hidden"><div class="t" style="left:0.50px;top:4.28px;font-size:11.00px;transform:scaleX(0.9500);">psTwoPass</div></div>
<svg class="a" style="left:7px;top:548px;" width="10" height="10" viewBox="0 0 10 10"><rect x="0.5" y="0.5" width="8" height="8" fill="#fff" stroke="#222"/><path d="M2 4.5 H7" stroke="#111"/></svg>
<div class="t" style="left:20.30px;top:547.98px;font-size:11.00px;font-weight:bold;transform:scaleX(1.0800);">Layout</div>
<div class="a" style="left:21px;top:560px;width:306px;height:16px;background:#ffffff;"></div>
<div class="a" style="left:20px;top:560px;width:1px;height:16px;background:#a0a0a0;"></div>
<div class="a" style="left:21px;top:575px;width:306px;height:1px;background:#e8e8e8;"></div>
<div class="a" style="left:147px;top:560px;width:1px;height:16px;background:#e8e8e8;"></div>
<div class="a" style="left:35px;top:560px;width:112px;height:16px;overflow:hidden"><div class="t" style="left:0.40px;top:4.28px;font-size:11.00px;transform:scaleX(0.9500);">ColumnPositions</div></div>
<div class="a" style="left:147px;top:560px;width:180px;height:16px;overflow:hidden"><div class="t" style="left:0.50px;top:4.28px;font-size:11.00px;transform:scaleX(0.9500);">(TStringList)</div></div>
<div class="a" style="left:21px;top:576px;width:306px;height:16px;background:#ffffff;"></div>
<div class="a" style="left:20px;top:576px;width:1px;height:16px;background:#a0a0a0;"></div>
<div class="a" style="left:21px;top:591px;width:306px;height:1px;background:#e8e8e8;"></div>
<div class="a" style="left:147px;top:576px;width:1px;height:16px;background:#e8e8e8;"></div>
<div class="a" style="left:35px;top:576px;width:112px;height:16px;overflow:hidden"><div class="t" style="left:0.40px;top:4.28px;font-size:11.00px;transform:scaleX(0.9500);">Columns</div></div>
<div class="a" style="left:147px;top:576px;width:180px;height:16px;overflow:hidden"><div class="t" style="left:0.50px;top:4.28px;font-size:11.00px;transform:scaleX(0.9500);">1</div></div>
<div class="a" style="left:21px;top:592px;width:306px;height:16px;background:#ffffff;"></div>
<div class="a" style="left:20px;top:592px;width:1px;height:16px;background:#a0a0a0;"></div>
<div class="a" style="left:21px;top:607px;width:306px;height:1px;background:#e8e8e8;"></div>
<div class="a" style="left:147px;top:592px;width:1px;height:16px;background:#e8e8e8;"></div>
<div class="a" style="left:35px;top:592px;width:112px;height:16px;overflow:hidden"><div class="t" style="left:0.40px;top:4.28px;font-size:11.00px;transform:scaleX(0.9500);">ColumnWidth</div></div>
<div class="a" style="left:147px;top:592px;width:180px;height:16px;overflow:hidden"><div class="t" style="left:0.50px;top:4.28px;font-size:11.00px;transform:scaleX(0.9500);">8</div></div>
<div class="a" style="left:21px;top:608px;width:306px;height:16px;background:#ffffff;"></div>
<div class="a" style="left:20px;top:608px;width:1px;height:16px;background:#a0a0a0;"></div>
<div class="a" style="left:21px;top:623px;width:306px;height:1px;background:#e8e8e8;"></div>
<div class="a" style="left:147px;top:608px;width:1px;height:16px;background:#e8e8e8;"></div>
<svg class="a" style="left:23px;top:612px;" width="10" height="10" viewBox="0 0 10 10"><rect x="0.5" y="0.5" width="8" height="8" fill="#fff" stroke="#222"/><path d="M2 4.5 H7 M4.5 2 V7" stroke="#111"/></svg>
<div class="a" style="left:35px;top:608px;width:112px;height:16px;overflow:hidden"><div class="t" style="left:0.40px;top:4.28px;font-size:11.00px;transform:scaleX(0.9500);">PrinterSetup</div></div>
<div class="a" style="left:147px;top:608px;width:180px;height:16px;overflow:hidden"><div class="t" style="left:0.50px;top:4.28px;font-size:11.00px;transform:scaleX(0.9500);">(TppPrinterSetup)</div></div>
<div class="a" style="left:21px;top:624px;width:306px;height:16px;background:#ffffff;"></div>
<div class="a" style="left:20px;top:624px;width:1px;height:16px;background:#a0a0a0;"></div>
<div class="a" style="left:21px;top:639px;width:306px;height:1px;background:#e8e8e8;"></div>
<div class="a" style="left:147px;top:624px;width:1px;height:16px;background:#e8e8e8;"></div>
<div class="a" style="left:35px;top:624px;width:112px;height:16px;overflow:hidden"><div class="t" style="left:0.40px;top:4.28px;font-size:11.00px;transform:scaleX(0.9500);">SavePrinterSetup</div></div>
<svg class="a" style="left:150px;top:626px;" width="12" height="12" viewBox="0 0 12 12"><path d="M1 12 V1 H11" stroke="#000" stroke-width="2" fill="none"/><path d="M2 11 H11 V2" stroke="#eeeeee" fill="none"/></svg>
<div class="a" style="left:21px;top:640px;width:306px;height:16px;background:#ffffff;"></div>
<div class="a" style="left:20px;top:640px;width:1px;height:16px;background:#a0a0a0;"></div>
<div class="a" style="left:21px;top:655px;width:306px;height:1px;background:#e8e8e8;"></div>
<div class="a" style="left:147px;top:640px;width:1px;height:16px;background:#e8e8e8;"></div>
<div class="a" style="left:35px;top:640px;width:112px;height:16px;overflow:hidden"><div class="t" style="left:0.40px;top:4.28px;font-size:11.00px;transform:scaleX(0.9500);">Units</div></div>
<div class="a" style="left:147px;top:640px;width:180px;height:16px;overflow:hidden"><div class="t" style="left:0.50px;top:4.28px;font-size:11.00px;transform:scaleX(0.9500);">utInches</div></div>
<svg class="a" style="left:7px;top:660px;" width="10" height="10" viewBox="0 0 10 10"><rect x="0.5" y="0.5" width="8" height="8" fill="#fff" stroke="#222"/><path d="M2 4.5 H7" stroke="#111"/></svg>
<div class="t" style="left:20.30px;top:659.98px;font-size:11.00px;font-weight:bold;transform:scaleX(1.0800);">Output - File</div>
<div class="a" style="left:21px;top:672px;width:306px;height:16px;background:#ffffff;"></div>
<div class="a" style="left:20px;top:672px;width:1px;height:16px;background:#a0a0a0;"></div>
<div class="a" style="left:21px;top:687px;width:306px;height:1px;background:#e8e8e8;"></div>
<div class="a" style="left:147px;top:672px;width:1px;height:16px;background:#e8e8e8;"></div>
<div class="a" style="left:35px;top:672px;width:112px;height:16px;overflow:hidden"><div class="t" style="left:0.40px;top:4.28px;font-size:11.00px;transform:scaleX(0.9500);">AllowPrintToArchive</div></div>
<svg class="a" style="left:150px;top:674px;" width="12" height="12" viewBox="0 0 12 12"><path d="M1 12 V1 H11" stroke="#000" stroke-width="2" fill="none"/><path d="M2 11 H11 V2" stroke="#eeeeee" fill="none"/></svg>
<div class="a" style="left:21px;top:688px;width:306px;height:16px;background:#ffffff;"></div>
<div class="a" style="left:20px;top:688px;width:1px;height:16px;background:#a0a0a0;"></div>
<div class="a" style="left:21px;top:703px;width:306px;height:1px;background:#e8e8e8;"></div>
<div class="a" style="left:147px;top:688px;width:1px;height:16px;background:#e8e8e8;"></div>
<div class="a" style="left:35px;top:688px;width:112px;height:16px;overflow:hidden"><div class="t" style="left:0.40px;top:4.28px;font-size:11.00px;transform:scaleX(0.9500);">AllowPrintToFile</div></div>
<svg class="a" style="left:150px;top:690px;" width="12" height="12" viewBox="0 0 12 12"><path d="M1 12 V1 H11" stroke="#000" stroke-width="2" fill="none"/><path d="M2 11 H11 V2" stroke="#eeeeee" fill="none"/><path d="M3.5 6 L5.5 8.5 L10 3" stroke="#000" stroke-width="1.8" fill="none"/></svg>
<div class="a" style="left:21px;top:704px;width:306px;height:16px;background:#ffffff;"></div>
<div class="a" style="left:20px;top:704px;width:1px;height:16px;background:#a0a0a0;"></div>
<div class="a" style="left:21px;top:719px;width:306px;height:1px;background:#e8e8e8;"></div>
<div class="a" style="left:147px;top:704px;width:1px;height:16px;background:#e8e8e8;"></div>
<div class="a" style="left:35px;top:704px;width:112px;height:16px;overflow:hidden"><div class="t" style="left:0.40px;top:4.28px;font-size:11.00px;transform:scaleX(0.9500);">ArchiveFileName</div></div>
<div class="a" style="left:147px;top:704px;width:180px;height:16px;overflow:hidden"><div class="t" style="left:0.50px;top:4.28px;font-size:11.00px;transform:scaleX(0.9500);">($MyDocuments)\ReportArchive.raf</div></div>
<div class="a" style="left:21px;top:720px;width:306px;height:16px;background:#ffffff;"></div>
<div class="a" style="left:20px;top:720px;width:1px;height:16px;background:#a0a0a0;"></div>
<div class="a" style="left:21px;top:735px;width:306px;height:1px;background:#e8e8e8;"></div>
<div class="a" style="left:147px;top:720px;width:1px;height:16px;background:#e8e8e8;"></div>
<svg class="a" style="left:23px;top:724px;" width="10" height="10" viewBox="0 0 10 10"><rect x="0.5" y="0.5" width="8" height="8" fill="#fff" stroke="#222"/><path d="M2 4.5 H7 M4.5 2 V7" stroke="#111"/></svg>
<div class="a" style="left:35px;top:720px;width:112px;height:16px;overflow:hidden"><div class="t" style="left:0.40px;top:4.28px;font-size:11.00px;transform:scaleX(0.9500);">CloudDriveSettings</div></div>
<div class="a" style="left:147px;top:720px;width:180px;height:16px;overflow:hidden"><div class="t" style="left:0.50px;top:4.28px;font-size:11.00px;transform:scaleX(0.9500);">(TppCloudDriveSettings)</div></div>
<div class="a" style="left:21px;top:736px;width:306px;height:16px;background:#ffffff;"></div>
<div class="a" style="left:20px;top:736px;width:1px;height:16px;background:#a0a0a0;"></div>
<div class="a" style="left:21px;top:751px;width:306px;height:1px;background:#e8e8e8;"></div>
<div class="a" style="left:147px;top:736px;width:1px;height:16px;background:#e8e8e8;"></div>
<div class="a" style="left:35px;top:736px;width:112px;height:16px;overflow:hidden"><div class="t" style="left:0.40px;top:4.28px;font-size:11.00px;transform:scaleX(0.9500);">OpenFile</div></div>
<svg class="a" style="left:150px;top:738px;" width="12" height="12" viewBox="0 0 12 12"><path d="M1 12 V1 H11" stroke="#000" stroke-width="2" fill="none"/><path d="M2 11 H11 V2" stroke="#eeeeee" fill="none"/></svg>
<div class="a" style="left:21px;top:752px;width:306px;height:16px;background:#ffffff;"></div>
<div class="a" style="left:20px;top:752px;width:1px;height:16px;background:#a0a0a0;"></div>
<div class="a" style="left:21px;top:767px;width:306px;height:1px;background:#e8e8e8;"></div>
<div class="a" style="left:147px;top:752px;width:1px;height:16px;background:#e8e8e8;"></div>
<svg class="a" style="left:23px;top:756px;" width="10" height="10" viewBox="0 0 10 10"><rect x="0.5" y="0.5" width="8" height="8" fill="#fff" stroke="#222"/><path d="M2 4.5 H7 M4.5 2 V7" stroke="#111"/></svg>
<div class="a" style="left:35px;top:752px;width:112px;height:16px;overflow:hidden"><div class="t" style="left:0.40px;top:4.28px;font-size:11.00px;transform:scaleX(0.9500);">PDFSettings</div></div>
<div class="a" style="left:147px;top:752px;width:180px;height:16px;overflow:hidden"><div class="t" style="left:0.50px;top:4.28px;font-size:11.00px;transform:scaleX(0.9500);">(TppPDFSettings)</div></div>
<div class="a" style="left:21px;top:768px;width:306px;height:16px;background:#ffffff;"></div>
<div class="a" style="left:20px;top:768px;width:1px;height:16px;background:#a0a0a0;"></div>
<div class="a" style="left:21px;top:783px;width:306px;height:1px;background:#e8e8e8;"></div>
<div class="a" style="left:147px;top:768px;width:1px;height:16px;background:#e8e8e8;"></div>
<svg class="a" style="left:23px;top:772px;" width="10" height="10" viewBox="0 0 10 10"><rect x="0.5" y="0.5" width="8" height="8" fill="#fff" stroke="#222"/><path d="M2 4.5 H7 M4.5 2 V7" stroke="#111"/></svg>
<div class="a" style="left:35px;top:768px;width:112px;height:16px;overflow:hidden"><div class="t" style="left:0.40px;top:4.28px;font-size:11.00px;transform:scaleX(0.9500);">RTFSettings</div></div>
<div class="a" style="left:147px;top:768px;width:180px;height:16px;overflow:hidden"><div class="t" style="left:0.50px;top:4.28px;font-size:11.00px;transform:scaleX(0.9500);">(TppRTFSettings)</div></div>
<div class="a" style="left:21px;top:784px;width:306px;height:16px;background:#ffffff;"></div>
<div class="a" style="left:20px;top:784px;width:1px;height:16px;background:#a0a0a0;"></div>
<div class="a" style="left:21px;top:799px;width:306px;height:1px;background:#e8e8e8;"></div>
<div class="a" style="left:147px;top:784px;width:1px;height:16px;background:#e8e8e8;"></div>
<div class="a" style="left:35px;top:784px;width:112px;height:16px;overflow:hidden"><div class="t" style="left:0.40px;top:4.28px;font-size:11.00px;transform:scaleX(0.9500);">TextFileName</div></div>
<div class="a" style="left:147px;top:784px;width:180px;height:16px;overflow:hidden"><div class="t" style="left:0.50px;top:4.28px;font-size:11.00px;transform:scaleX(0.9500);">C:\Documents and Settings\Administrator</div></div>
<div class="a" style="left:21px;top:800px;width:306px;height:16px;background:#ffffff;"></div>
<div class="a" style="left:20px;top:800px;width:1px;height:16px;background:#a0a0a0;"></div>
<div class="a" style="left:21px;top:815px;width:306px;height:1px;background:#e8e8e8;"></div>
<div class="a" style="left:147px;top:800px;width:1px;height:16px;background:#e8e8e8;"></div>
<div class="a" style="left:35px;top:800px;width:112px;height:16px;overflow:hidden"><div class="t" style="left:0.40px;top:4.28px;font-size:11.00px;transform:scaleX(0.9500);">TextFileType</div></div>
<div class="a" style="left:147px;top:800px;width:180px;height:16px;overflow:hidden"><div class="t" style="left:0.50px;top:4.28px;font-size:11.00px;transform:scaleX(0.9500);">ftComma</div></div>
<div class="a" style="left:21px;top:816px;width:306px;height:16px;background:#ffffff;"></div>
<div class="a" style="left:20px;top:816px;width:1px;height:16px;background:#a0a0a0;"></div>
<div class="a" style="left:21px;top:831px;width:306px;height:1px;background:#e8e8e8;"></div>
<div class="a" style="left:147px;top:816px;width:1px;height:16px;background:#e8e8e8;"></div>
<svg class="a" style="left:23px;top:820px;" width="10" height="10" viewBox="0 0 10 10"><rect x="0.5" y="0.5" width="8" height="8" fill="#fff" stroke="#222"/><path d="M2 4.5 H7 M4.5 2 V7" stroke="#111"/></svg>
<div class="a" style="left:35px;top:816px;width:112px;height:16px;overflow:hidden"><div class="t" style="left:0.40px;top:4.28px;font-size:11.00px;transform:scaleX(0.9500);">XLSSettings</div></div>
<div class="a" style="left:147px;top:816px;width:180px;height:16px;overflow:hidden"><div class="t" style="left:0.50px;top:4.28px;font-size:11.00px;transform:scaleX(0.9500);">(TppXLSSettings)</div></div>
<svg class="a" style="left:7px;top:836px;" width="10" height="10" viewBox="0 0 10 10"><rect x="0.5" y="0.5" width="8" height="8" fill="#fff" stroke="#222"/><path d="M2 4.5 H7" stroke="#111"/></svg>
<div class="t" style="left:20.30px;top:835.98px;font-size:11.00px;font-weight:bold;transform:scaleX(1.0800);">Storage</div>
<div class="a" style="left:21px;top:848px;width:306px;height:16px;background:#ffffff;"></div>
<div class="a" style="left:20px;top:848px;width:1px;height:16px;background:#a0a0a0;"></div>
<div class="a" style="left:21px;top:863px;width:306px;height:1px;background:#e8e8e8;"></div>
<div class="a" style="left:147px;top:848px;width:1px;height:16px;background:#e8e8e8;"></div>
<div class="a" style="left:35px;top:848px;width:112px;height:16px;overflow:hidden"><div class="t" style="left:0.40px;top:4.28px;font-size:11.00px;transform:scaleX(0.9500);">SaveAsTemplate</div></div>
<svg class="a" style="left:150px;top:850px;" width="12" height="12" viewBox="0 0 12 12"><path d="M1 12 V1 H11" stroke="#000" stroke-width="2" fill="none"/><path d="M2 11 H11 V2" stroke="#eeeeee" fill="none"/></svg>
<div class="a" style="left:21px;top:864px;width:306px;height:16px;background:#ffffff;"></div>
<div class="a" style="left:20px;top:864px;width:1px;height:16px;background:#a0a0a0;"></div>
<div class="a" style="left:21px;top:879px;width:306px;height:1px;background:#e8e8e8;"></div>
<div class="a" style="left:147px;top:864px;width:1px;height:16px;background:#e8e8e8;"></div>
<svg class="a" style="left:23px;top:868px;" width="10" height="10" viewBox="0 0 10 10"><rect x="0.5" y="0.5" width="8" height="8" fill="#fff" stroke="#222"/><path d="M2 4.5 H7 M4.5 2 V7" stroke="#111"/></svg>
<div class="a" style="left:35px;top:864px;width:112px;height:16px;overflow:hidden"><div class="t" style="left:0.40px;top:4.28px;font-size:11.00px;transform:scaleX(0.9500);">Template</div></div>
<div class="a" style="left:147px;top:864px;width:180px;height:16px;overflow:hidden"><div class="t" style="left:0.50px;top:4.28px;font-size:11.00px;transform:scaleX(0.9500);">(TppReportTemplate)</div></div>
<svg class="a" style="left:7px;top:884px;" width="10" height="10" viewBox="0 0 10 10"><rect x="0.5" y="0.5" width="8" height="8" fill="#fff" stroke="#222"/><path d="M2 4.5 H7" stroke="#111"/></svg>
<div class="t" style="left:20.30px;top:883.98px;font-size:11.00px;font-weight:bold;transform:scaleX(1.0800);">User Interface</div>
<div class="a" style="left:20px;top:368px;width:307px;height:1px;background:#8c8c8c;"></div>
<div class="a" style="left:4px;top:400px;width:323px;height:1px;background:#8c8c8c;"></div>
<div class="a" style="left:20px;top:416px;width:307px;height:1px;background:#8c8c8c;"></div>
<div class="a" style="left:4px;top:544px;width:323px;height:1px;background:#8c8c8c;"></div>
<div class="a" style="left:20px;top:560px;width:307px;height:1px;background:#8c8c8c;"></div>
<div class="a" style="left:4px;top:656px;width:323px;height:1px;background:#8c8c8c;"></div>
<div class="a" style="left:20px;top:672px;width:307px;height:1px;background:#8c8c8c;"></div>
<div class="a" style="left:4px;top:832px;width:323px;height:1px;background:#8c8c8c;"></div>
<div class="a" style="left:20px;top:848px;width:307px;height:1px;background:#8c8c8c;"></div>
<div class="a" style="left:4px;top:880px;width:323px;height:1px;background:#8c8c8c;"></div>
<div class="a" style="left:20px;top:896px;width:307px;height:1px;background:#8c8c8c;"></div>
<div class="a" style="left:328px;top:352px;width:16px;height:544px;background:#f0f0f0;"></div>
<div class="a" style="left:336px;top:370px;width:2px;height:372px;background:#7a7a7a;"></div>
<div class="a" style="left:345px;top:134px;width:850px;height:761px;background:#f0f0f0;"></div>
<div class="a" style="left:345px;top:134px;width:1px;height:761px;background:#ffffff;"></div>
<svg class="a" style="left:351px;top:137px;" width="13" height="14" viewBox="0 0 13 14"><rect x="0.5" y="0.5" width="12" height="13" fill="#dfe8f3" stroke="#2a4a6a"/><rect x="0.5" y="0.5" width="12" height="2.5" fill="#3a5f8a"/><path d="M5 5 H11 M5 7.5 H11 M5 10 H11" stroke="#2a4a6a" stroke-width="1.2"/><path d="M3 3 V13.5" stroke="#2a4a6a"/><path d="M1 5 H3 M1 7.5 H3 M1 10 H3" stroke="#2a4a6a"/></svg>
<div class="a" style="left:368px;top:137px;width:827px;height:14px;background:#ffffff;"></div>
<div class="a" style="left:369px;top:137px;width:1.2px;height:3.5px;background:#000;"></div>
<div class="a" style="left:381px;top:137px;width:1.2px;height:3.5px;background:#000;"></div>
<div class="a" style="left:393px;top:137px;width:1.3px;height:14px;background:#000;"></div>
<div class="t" style="left:395.00px;top:142.10px;font-size:8.50px;transform:scaleX(0.9000);">0</div>
<div class="a" style="left:405px;top:137px;width:1.2px;height:3.5px;background:#000;"></div>
<div class="a" style="left:417px;top:137px;width:1.2px;height:3.5px;background:#000;"></div>
<div class="a" style="left:429px;top:137px;width:1.2px;height:3.5px;background:#000;"></div>
<div class="a" style="left:441px;top:137px;width:1.3px;height:7px;background:#000;"></div>
<div class="a" style="left:453px;top:137px;width:1.2px;height:3.5px;background:#000;"></div>
<div class="a" style="left:465px;top:137px;width:1.2px;height:3.5px;background:#000;"></div>
<div class="a" style="left:477px;top:137px;width:1.2px;height:3.5px;background:#000;"></div>
<div class="a" style="left:489px;top:137px;width:1.3px;height:14px;background:#000;"></div>
<div class="t" style="left:491.00px;top:142.10px;font-size:8.50px;transform:scaleX(0.9000);">1</div>
<div class="a" style="left:501px;top:137px;width:1.2px;height:3.5px;background:#000;"></div>
<div class="a" style="left:513px;top:137px;width:1.2px;height:3.5px;background:#000;"></div>
<div class="a" style="left:525px;top:137px;width:1.2px;height:3.5px;background:#000;"></div>
<div class="a" style="left:537px;top:137px;width:1.3px;height:7px;background:#000;"></div>
<div class="a" style="left:549px;top:137px;width:1.2px;height:3.5px;background:#000;"></div>
<div class="a" style="left:561px;top:137px;width:1.2px;height:3.5px;background:#000;"></div>
<div class="a" style="left:573px;top:137px;width:1.2px;height:3.5px;background:#000;"></div>
<div class="a" style="left:585px;top:137px;width:1.3px;height:14px;background:#000;"></div>
<div class="t" style="left:587.00px;top:142.10px;font-size:8.50px;transform:scaleX(0.9000);">2</div>
<div class="a" style="left:597px;top:137px;width:1.2px;height:3.5px;background:#000;"></div>
<div class="a" style="left:609px;top:137px;width:1.2px;height:3.5px;background:#000;"></div>
<div class="a" style="left:621px;top:137px;width:1.2px;height:3.5px;background:#000;"></div>
<div class="a" style="left:633px;top:137px;width:1.3px;height:7px;background:#000;"></div>
<div class="a" style="left:645px;top:137px;width:1.2px;height:3.5px;background:#000;"></div>
<div class="a" style="left:657px;top:137px;width:1.2px;height:3.5px;background:#000;"></div>
<div class="a" style="left:669px;top:137px;width:1.2px;height:3.5px;background:#000;"></div>
<div class="a" style="left:681px;top:137px;width:1.3px;height:14px;background:#000;"></div>
<div class="t" style="left:683.00px;top:142.10px;font-size:8.50px;transform:scaleX(0.9000);">3</div>
<div class="a" style="left:693px;top:137px;width:1.2px;height:3.5px;background:#000;"></div>
<div class="a" style="left:705px;top:137px;width:1.2px;height:3.5px;background:#000;"></div>
<div class="a" style="left:717px;top:137px;width:1.2px;height:3.5px;background:#000;"></div>
<div class="a" style="left:729px;top:137px;width:1.3px;height:7px;background:#000;"></div>
<div class="a" style="left:741px;top:137px;width:1.2px;height:3.5px;background:#000;"></div>
<div class="a" style="left:753px;top:137px;width:1.2px;height:3.5px;background:#000;"></div>
<div class="a" style="left:765px;top:137px;width:1.2px;height:3.5px;background:#000;"></div>
<div class="a" style="left:777px;top:137px;width:1.3px;height:14px;background:#000;"></div>
<div class="t" style="left:779.00px;top:142.10px;font-size:8.50px;transform:scaleX(0.9000);">4</div>
<div class="a" style="left:789px;top:137px;width:1.2px;height:3.5px;background:#000;"></div>
<div class="a" style="left:801px;top:137px;width:1.2px;height:3.5px;background:#000;"></div>
<div class="a" style="left:813px;top:137px;width:1.2px;height:3.5px;background:#000;"></div>
<div class="a" style="left:825px;top:137px;width:1.3px;height:7px;background:#000;"></div>
<div class="a" style="left:837px;top:137px;width:1.2px;height:3.5px;background:#000;"></div>
<div class="a" style="left:849px;top:137px;width:1.2px;height:3.5px;background:#000;"></div>
<div class="a" style="left:861px;top:137px;width:1.2px;height:3.5px;background:#000;"></div>
<div class="a" style="left:873px;top:137px;width:1.3px;height:14px;background:#000;"></div>
<div class="t" style="left:875.00px;top:142.10px;font-size:8.50px;transform:scaleX(0.9000);">5</div>
<div class="a" style="left:885px;top:137px;width:1.2px;height:3.5px;background:#000;"></div>
<div class="a" style="left:897px;top:137px;width:1.2px;height:3.5px;background:#000;"></div>
<div class="a" style="left:909px;top:137px;width:1.2px;height:3.5px;background:#000;"></div>
<div class="a" style="left:921px;top:137px;width:1.3px;height:7px;background:#000;"></div>
<div class="a" style="left:933px;top:137px;width:1.2px;height:3.5px;background:#000;"></div>
<div class="a" style="left:945px;top:137px;width:1.2px;height:3.5px;background:#000;"></div>
<div class="a" style="left:957px;top:137px;width:1.2px;height:3.5px;background:#000;"></div>
<div class="a" style="left:969px;top:137px;width:1.3px;height:14px;background:#000;"></div>
<div class="t" style="left:971.00px;top:142.10px;font-size:8.50px;transform:scaleX(0.9000);">6</div>
<div class="a" style="left:981px;top:137px;width:1.2px;height:3.5px;background:#000;"></div>
<div class="a" style="left:993px;top:137px;width:1.2px;height:3.5px;background:#000;"></div>
<div class="a" style="left:1005px;top:137px;width:1.2px;height:3.5px;background:#000;"></div>
<div class="a" style="left:1017px;top:137px;width:1.3px;height:7px;background:#000;"></div>
<div class="a" style="left:1029px;top:137px;width:1.2px;height:3.5px;background:#000;"></div>
<div class="a" style="left:1041px;top:137px;width:1.2px;height:3.5px;background:#000;"></div>
<div class="a" style="left:1053px;top:137px;width:1.2px;height:3.5px;background:#000;"></div>
<div class="a" style="left:1065px;top:137px;width:1.3px;height:14px;background:#000;"></div>
<div class="t" style="left:1067.00px;top:142.10px;font-size:8.50px;transform:scaleX(0.9000);">7</div>
<div class="a" style="left:1077px;top:137px;width:1.2px;height:3.5px;background:#000;"></div>
<div class="a" style="left:1089px;top:137px;width:1.2px;height:3.5px;background:#000;"></div>
<div class="a" style="left:1101px;top:137px;width:1.2px;height:3.5px;background:#000;"></div>
<div class="a" style="left:1113px;top:137px;width:1.3px;height:7px;background:#000;"></div>
<div class="a" style="left:1125px;top:137px;width:1.2px;height:3.5px;background:#000;"></div>
<div class="a" style="left:1137px;top:137px;width:1.2px;height:3.5px;background:#000;"></div>
<div class="a" style="left:1149px;top:137px;width:1.2px;height:3.5px;background:#000;"></div>
<div class="a" style="left:1161px;top:137px;width:1.3px;height:14px;background:#000;"></div>
<div class="t" style="left:1163.00px;top:142.10px;font-size:8.50px;transform:scaleX(0.9000);">8</div>
<div class="a" style="left:1173px;top:137px;width:1.2px;height:3.5px;background:#000;"></div>
<div class="a" style="left:1185px;top:137px;width:1.2px;height:3.5px;background:#000;"></div>
<div class="a" style="left:369px;top:155px;width:826px;height:703px;background:#a0a0a0;"></div>
<div class="a" style="left:369px;top:155px;width:817px;height:519px;background:#ffffff;"></div>
<div class="a" style="left:364px;top:155px;width:5px;height:519px;background:#ececec;"></div>
<div class="a" style="left:351px;top:155px;width:13px;height:25px;background:#ffffff;"></div><div class="a" style="left:351px;top:156px;width:3px;height:1px;background:#000;"></div><div class="a" style="left:351px;top:168px;width:3px;height:1px;background:#000;"></div>
<div class="a" style="left:351px;top:180px;width:835px;height:16px;background:#efefef;"></div><svg class="a" style="left:376px;top:184px;" width="7" height="5" viewBox="0 0 7 5"><path d="M0.5 4.5 L3.5 1 L6.5 4.5" stroke="#222" stroke-width="1.1" fill="none"/></svg><div class="t" style="left:388.30px;top:182.34px;font-size:12.00px;transform:scaleX(0.9000);">Title</div>
<div class="a" style="left:351px;top:196px;width:13px;height:126px;background:#ffffff;"></div><div class="t" style="left:358.00px;top:199.00px;font-size:8.50px;transform:scaleX(0.9500);">0</div><div class="a" style="left:351px;top:208px;width:3px;height:1px;background:#000;"></div><div class="a" style="left:351px;top:220px;width:3px;height:1px;background:#000;"></div><div class="a" style="left:351px;top:232px;width:3px;height:1px;background:#000;"></div><div class="a" style="left:351px;top:244px;width:6px;height:1px;background:#000;"></div><div class="a" style="left:351px;top:256px;width:3px;height:1px;background:#000;"></div><div class="a" style="left:351px;top:268px;width:3px;height:1px;background:#000;"></div><div class="a" style="left:351px;top:280px;width:3px;height:1px;background:#000;"></div><div class="a" style="left:351px;top:292px;width:13px;height:1px;background:#000;"></div><div class="t" style="left:358.00px;top:295.00px;font-size:8.50px;transform:scaleX(0.9500);">1</div><div class="a" style="left:351px;top:304px;width:3px;height:1px;background:#000;"></div><div class="a" style="left:351px;top:316px;width:3px;height:1px;background:#000;"></div>
<svg class="a" style="left:393px;top:196px;" width="770" height="126" viewBox="0 0 770 126"><defs><pattern id="p393_196" width="8" height="8" patternUnits="userSpaceOnUse" x="0" y="1"><rect width="1" height="1" fill="#8e8e8e"/></pattern></defs><rect width="770" height="126" fill="url(#p393_196)"/></svg>
<div class="a" style="left:393px;top:235px;width:1px;height:87px;background:#3f7fc4;"></div>
<div class="a" style="left:1162px;top:196px;width:1px;height:126px;background:#3f7fc4;"></div>
<svg class="a" style="left:393px;top:199px;" width="144" height="36" viewBox="0 0 144 36"><rect x="0.5" y="0.5" width="143" height="35" fill="#ffffff" stroke="#767676" stroke-dasharray="3 3"/></svg>
<svg class="a" style="left:395px;top:201px;" width="26" height="26" viewBox="0 0 26 26"><defs><clipPath id="gl"><ellipse cx="13" cy="12.7" rx="12.8" ry="12.6"/></clipPath></defs><g clip-path="url(#gl)"><rect x="0" y="0" width="6.5" height="5" fill="#2aa6d6"/><rect x="7.5" y="0" width="5.5" height="5" fill="#4a4444"/><rect x="14" y="0" width="5.5" height="5" fill="#2aa6d6"/><rect x="20.5" y="0" width="5.5" height="5" fill="#4a4444"/><rect x="0" y="6.5" width="6.5" height="5.0" fill="#4a4444"/><rect x="7.5" y="6.5" width="5.5" height="5.0" fill="#2aa6d6"/><rect x="14" y="6.5" width="5.5" height="5.0" fill="#4a4444"/><rect x="20.5" y="6.5" width="5.5" height="5.0" fill="#2aa6d6"/><rect x="0" y="13" width="6.5" height="5" fill="#2aa6d6"/><rect x="7.5" y="13" width="5.5" height="5" fill="#4a4444"/><rect x="14" y="13" width="5.5" height="5" fill="#2aa6d6"/><rect x="20.5" y="13" width="5.5" height="5" fill="#4a4444"/><rect x="0" y="19.5" width="6.5" height="6.5" fill="#4a4444"/><rect x="7.5" y="19.5" width="5.5" height="6.5" fill="#2aa6d6"/><rect x="14" y="19.5" width="5.5" height="6.5" fill="#4a4444"/><rect x="20.5" y="19.5" width="5.5" height="6.5" fill="#2aa6d6"/></g></svg>
<div class="t" style="left:424.00px;top:208.24px;font-size:12.00px;font-family:'Liberation Serif',serif;transform:scaleX(0.9471);">ABC COMPANY</div>
<svg class="a" style="left:393px;top:237px;" width="134" height="20" viewBox="0 0 134 20"><rect x="0.5" y="0.5" width="133" height="19" fill="none" stroke="#767676" stroke-dasharray="3 3"/></svg>
<div class="t" style="left:393.50px;top:241.32px;font-size:14.50px;font-weight:bold;">ABC  Company, Inc</div>
<svg class="a" style="left:393px;top:260px;" width="76" height="18" viewBox="0 0 76 18"><rect x="0.5" y="0.5" width="75" height="17" fill="none" stroke="#767676" stroke-dasharray="3 3"/></svg>
<div class="t" style="left:393.50px;top:263.69px;font-size:13.00px;transform:scaleX(0.9395);">123 Some St.</div>
<svg class="a" style="left:393px;top:280px;" width="119" height="18" viewBox="0 0 119 18"><rect x="0.5" y="0.5" width="118" height="17" fill="none" stroke="#767676" stroke-dasharray="3 3"/></svg>
<div class="t" style="left:393.50px;top:283.69px;font-size:13.00px;transform:scaleX(0.9637);">Your Town State, ZIP</div>
<svg class="a" style="left:586px;top:235px;" width="381" height="30" viewBox="0 0 381 30"><rect x="0.5" y="0.5" width="380" height="29" fill="none" stroke="#767676" stroke-dasharray="3 3"/></svg>
<div class="t" style="left:655.50px;top:241.21px;font-size:21.00px;font-weight:bold;transform:scaleX(0.9821);">Certificate of Calibration</div>
<svg class="a" style="left:668px;top:272px;" width="85" height="20" viewBox="0 0 85 20"><rect x="0.5" y="0.5" width="84" height="19" fill="none" stroke="#767676" stroke-dasharray="3 3"/></svg>
<div class="t" style="left:707.70px;top:276.14px;font-size:14.00px;font-weight:bold;transform:scaleX(0.9922);">Cert #:</div>
<svg class="a" style="left:765px;top:272px;" width="58" height="20" viewBox="0 0 58 20"><rect x="0.5" y="0.5" width="57" height="19" fill="none" stroke="#767676" stroke-dasharray="3 3"/></svg>
<div class="t" style="left:765.50px;top:276.14px;font-size:14.00px;font-weight:bold;transform:scaleX(1.0596);">93</div>
<svg class="a" style="left:826px;top:272px;" width="27" height="20" viewBox="0 0 27 20"><rect x="0.5" y="0.5" width="26" height="19" fill="none" stroke="#767676" stroke-dasharray="3 3"/></svg>
<div class="t" style="left:826.50px;top:276.14px;font-size:14.00px;transform:scaleX(0.9190);">Rev.</div>
<svg class="a" style="left:860px;top:272px;" width="30" height="20" viewBox="0 0 30 20"><rect x="0.5" y="0.5" width="29" height="19" fill="none" stroke="#767676" stroke-dasharray="3 3"/></svg>
<div class="t" style="left:861.00px;top:276.14px;font-size:14.00px;font-weight:bold;transform:scaleX(0.7706);">1</div>
<svg class="a" style="left:981px;top:208px;" width="83" height="17" viewBox="0 0 83 17"><rect x="0.5" y="0.5" width="82" height="16" fill="none" stroke="#767676" stroke-dasharray="3 3"/></svg>
<div class="t" style="left:981.50px;top:211.19px;font-size:13.00px;transform:scaleX(0.9832);">Generated On</div>
<svg class="a" style="left:1067px;top:209px;" width="82" height="18" viewBox="0 0 82 18"><rect x="0.5" y="0.5" width="81" height="17" fill="none" stroke="#767676" stroke-dasharray="3 3"/></svg>
<div class="t" style="left:1095.50px;top:211.97px;font-size:13.50px;font-weight:bold;">3/6/2023</div>
<svg class="a" style="left:989px;top:226px;" width="75" height="17" viewBox="0 0 75 17"><rect x="0.5" y="0.5" width="74" height="16" fill="none" stroke="#767676" stroke-dasharray="3 3"/></svg>
<div class="t" style="left:990.00px;top:228.99px;font-size:13.00px;">WO Number</div>
<svg class="a" style="left:1067px;top:226px;" width="82" height="15" viewBox="0 0 82 15"><rect x="0.5" y="0.5" width="81" height="14" fill="none" stroke="#767676" stroke-dasharray="3 3"/></svg>
<div class="t" style="left:1135.40px;top:227.57px;font-size:13.50px;font-weight:bold;transform:scaleX(0.8524);">93</div>
<svg class="a" style="left:994px;top:244px;" width="70" height="17" viewBox="0 0 70 17"><rect x="0.5" y="0.5" width="69" height="16" fill="none" stroke="#767676" stroke-dasharray="3 3"/></svg>
<div class="t" style="left:994.50px;top:246.99px;font-size:13.00px;transform:scaleX(0.9908);">PO Number</div>
<svg class="a" style="left:1067px;top:244px;" width="82" height="15" viewBox="0 0 82 15"><rect x="0.5" y="0.5" width="81" height="14" fill="none" stroke="#767676" stroke-dasharray="3 3"/></svg>
<div class="t" style="left:1135.40px;top:245.57px;font-size:13.50px;font-weight:bold;transform:scaleX(0.8524);">93</div>
<div class="a" style="left:351px;top:322px;width:835px;height:16px;background:#efefef;"></div><svg class="a" style="left:376px;top:326px;" width="7" height="5" viewBox="0 0 7 5"><path d="M0.5 4.5 L3.5 1 L6.5 4.5" stroke="#222" stroke-width="1.1" fill="none"/></svg><div class="t" style="left:388.30px;top:324.34px;font-size:12.00px;transform:scaleX(0.9000);">Header</div>
<div class="a" style="left:351px;top:338px;width:13px;height:132px;background:#ffffff;"></div><div class="t" style="left:358.00px;top:341.00px;font-size:8.50px;transform:scaleX(0.9500);">0</div><div class="a" style="left:351px;top:350px;width:3px;height:1px;background:#000;"></div><div class="a" style="left:351px;top:362px;width:3px;height:1px;background:#000;"></div><div class="a" style="left:351px;top:374px;width:3px;height:1px;background:#000;"></div><div class="a" style="left:351px;top:386px;width:6px;height:1px;background:#000;"></div><div class="a" style="left:351px;top:398px;width:3px;height:1px;background:#000;"></div><div class="a" style="left:351px;top:410px;width:3px;height:1px;background:#000;"></div><div class="a" style="left:351px;top:422px;width:3px;height:1px;background:#000;"></div><div class="a" style="left:351px;top:434px;width:13px;height:1px;background:#000;"></div><div class="t" style="left:358.00px;top:437.00px;font-size:8.50px;transform:scaleX(0.9500);">1</div><div class="a" style="left:351px;top:446px;width:3px;height:1px;background:#000;"></div><div class="a" style="left:351px;top:458px;width:3px;height:1px;background:#000;"></div>
<div class="a" style="left:1162px;top:338px;width:1px;height:132px;background:#3f7fc4;"></div>
<svg class="a" style="left:393px;top:338px;" width="769" height="21" viewBox="0 0 769 21"><rect x="0.5" y="0.5" width="768" height="20" fill="none" stroke="#767676" stroke-dasharray="3 3"/></svg>
<svg class="a" style="left:393px;top:358px;" width="769" height="22" viewBox="0 0 769 22"><rect x="0.5" y="0.5" width="768" height="21" fill="none" stroke="#767676" stroke-dasharray="3 3"/></svg>
<svg class="a" style="left:393px;top:387px;" width="769" height="32" viewBox="0 0 769 32"><rect x="0.5" y="0.5" width="768" height="31" fill="none" stroke="#767676" stroke-dasharray="3 3"/></svg>
<svg class="a" style="left:393px;top:430px;" width="769" height="31" viewBox="0 0 769 31"><rect x="0.5" y="0.5" width="768" height="30" fill="none" stroke="#767676" stroke-dasharray="3 3"/></svg>
<svg class="a" style="left:393px;top:468px;" width="769" height="1" viewBox="0 0 769 1"><path d="M0 0.5 H769" stroke="#767676" stroke-dasharray="3 3"/></svg>
<div class="t" style="left:393.30px;top:340.14px;font-size:12.00px;transform:scaleX(0.9257);">subEvents: Events</div>
<div class="t" style="left:393.30px;top:360.14px;font-size:12.00px;transform:scaleX(0.9862);">subCalibrationTestPoints: CalibrationTestPoints</div>
<div class="t" style="left:393.30px;top:389.14px;font-size:12.00px;transform:scaleX(0.9114);">subMasters: Masters</div>
<div class="t" style="left:393.30px;top:432.14px;font-size:12.00px;transform:scaleX(0.9586);">subProcedures: EventProcedures</div>
<div class="a" style="left:351px;top:470px;width:835px;height:16px;background:#efefef;"></div><svg class="a" style="left:376px;top:474px;" width="7" height="5" viewBox="0 0 7 5"><path d="M0.5 4.5 L3.5 1 L6.5 4.5" stroke="#222" stroke-width="1.1" fill="none"/></svg><div class="t" style="left:388.30px;top:472.34px;font-size:12.00px;transform:scaleX(0.9000);">Detail</div>
<div class="a" style="left:351px;top:486px;width:13px;height:46px;background:#ffffff;"></div><div class="t" style="left:358.00px;top:489.00px;font-size:8.50px;transform:scaleX(0.9500);">0</div><div class="a" style="left:351px;top:498px;width:3px;height:1px;background:#000;"></div><div class="a" style="left:351px;top:510px;width:3px;height:1px;background:#000;"></div><div class="a" style="left:351px;top:522px;width:3px;height:1px;background:#000;"></div>
<svg class="a" style="left:393px;top:486px;" width="770" height="46" viewBox="0 0 770 46"><defs><pattern id="p393_486" width="8" height="8" patternUnits="userSpaceOnUse" x="0" y="1"><rect width="1" height="1" fill="#8e8e8e"/></pattern></defs><rect width="770" height="46" fill="url(#p393_486)"/></svg>
<div class="a" style="left:393px;top:486px;width:1px;height:46px;background:#3f7fc4;"></div>
<div class="a" style="left:1162px;top:486px;width:1px;height:46px;background:#3f7fc4;"></div>
<svg class="a" style="left:398px;top:491px;" width="108" height="13" viewBox="0 0 108 13"><rect x="0.5" y="0.5" width="107" height="12" fill="none" stroke="#767676" stroke-dasharray="3 3"/></svg>
<div class="t" style="left:398.50px;top:492.58px;font-size:11.00px;font-style:italic;transform:scaleX(0.9051);text-decoration:underline;">WWW.INDYSOFT.COM</div>
<svg class="a" style="left:702px;top:491px;" width="156" height="13" viewBox="0 0 156 13"><rect x="0.5" y="0.5" width="155" height="12" fill="none" stroke="#767676" stroke-dasharray="3 3"/></svg>
<div class="t" style="left:702.50px;top:492.58px;font-size:11.00px;font-style:italic;transform:scaleX(0.9651);">Certificate Created With IndySoft</div>
<svg class="a" style="left:1072px;top:491px;" width="70" height="17" viewBox="0 0 70 17"><rect x="0.5" y="0.5" width="69" height="16" fill="none" stroke="#767676" stroke-dasharray="3 3"/></svg>
<div class="t" style="left:1072.50px;top:494.07px;font-size:13.50px;font-weight:bold;transform:scaleX(0.9400);">Page 1 of 1</div>
<div class="a" style="left:351px;top:532px;width:835px;height:16px;background:#efefef;"></div><svg class="a" style="left:376px;top:536px;" width="7" height="5" viewBox="0 0 7 5"><path d="M0.5 4.5 L3.5 1 L6.5 4.5" stroke="#222" stroke-width="1.1" fill="none"/></svg><div class="t" style="left:388.30px;top:534.34px;font-size:12.00px;transform:scaleX(0.9000);">Footer</div>
<div class="a" style="left:351px;top:548px;width:13px;height:62px;background:#ffffff;"></div><div class="t" style="left:358.00px;top:551.00px;font-size:8.50px;transform:scaleX(0.9500);">0</div><div class="a" style="left:351px;top:560px;width:3px;height:1px;background:#000;"></div><div class="a" style="left:351px;top:572px;width:3px;height:1px;background:#000;"></div><div class="a" style="left:351px;top:584px;width:3px;height:1px;background:#000;"></div><div class="a" style="left:351px;top:596px;width:6px;height:1px;background:#000;"></div><div class="a" style="left:351px;top:608px;width:3px;height:1px;background:#000;"></div>
<svg class="a" style="left:393px;top:548px;" width="770" height="62" viewBox="0 0 770 62"><defs><pattern id="p393_548" width="8" height="8" patternUnits="userSpaceOnUse" x="0" y="1"><rect width="1" height="1" fill="#8e8e8e"/></pattern></defs><rect width="770" height="62" fill="url(#p393_548)"/></svg>
<div class="a" style="left:393px;top:548px;width:1px;height:62px;background:#3f7fc4;"></div>
<div class="a" style="left:1162px;top:548px;width:1px;height:62px;background:#3f7fc4;"></div>
<svg class="a" style="left:402px;top:565px;" width="87" height="18" viewBox="0 0 87 18"><rect x="0.5" y="0.5" width="86" height="17" fill="none" stroke="#767676" stroke-dasharray="3 3"/></svg>
<div class="t" style="left:402.00px;top:568.77px;font-size:13.50px;font-weight:bold;transform:scaleX(0.9397);">Calibrated By:</div>
<svg class="a" style="left:495px;top:550px;" width="185" height="50" viewBox="0 0 185 50"><rect x="0.5" y="0.5" width="184" height="49" fill="#ffffff" stroke="#767676" stroke-dasharray="3 3"/></svg>
<svg class="a" style="left:505px;top:593px;" width="22" height="8" viewBox="0 0 22 8"><path d="M2 7 Q8 1 14 3 Q17 4 16 7" stroke="#111" stroke-width="2" fill="none"/></svg>
<svg class="a" style="left:792px;top:566px;" width="84" height="18" viewBox="0 0 84 18"><rect x="0.5" y="0.5" width="83" height="17" fill="none" stroke="#767676" stroke-dasharray="3 3"/></svg>
<div class="t" style="left:792.00px;top:568.77px;font-size:13.50px;font-weight:bold;transform:scaleX(0.9378);">Approved By:</div>
<svg class="a" style="left:878px;top:551px;" width="276" height="49" viewBox="0 0 276 49"><rect x="0.5" y="0.5" width="275" height="48" fill="none" stroke="#767676" stroke-dasharray="3 3"/></svg>
<div class="a" style="left:351px;top:610px;width:835px;height:16px;background:#efefef;"></div><svg class="a" style="left:376px;top:614px;" width="7" height="5" viewBox="0 0 7 5"><path d="M0.5 4.5 L3.5 1 L6.5 4.5" stroke="#222" stroke-width="1.1" fill="none"/></svg><div class="t" style="left:388.30px;top:612.34px;font-size:12.00px;transform:scaleX(0.9000);">Summary</div>
<div class="a" style="left:345px;top:626px;width:24px;height:232px;background:#f0f0f0;"></div>
<div class="a" style="left:345px;top:858px;width:850px;height:17px;background:#f0f0f0;"></div>
<div class="a" style="left:369px;top:858px;width:826px;height:1px;background:#ffffff;"></div>
<div class="a" style="left:386px;top:866px;width:716px;height:2px;background:#858585;"></div>
<div class="a" style="left:346px;top:875px;width:849px;height:19px;background:#f0f0f0;"></div>
<div class="a" style="left:346px;top:875px;width:6px;height:19px;background:#ffffff;"></div>
<svg class="a" style="left:346px;top:875px;" width="849" height="19" viewBox="0 0 849 19"><path d="M0 0 H777.0 L772.0 19 H0 Z" fill="#ffffff"/><path d="M0 0.5 H6" stroke="#8a8a8a"/><path d="M6.0 0.5 L12.0 18.5 L109.0 18.5 L114.0 0.5" stroke="#8a8a8a" fill="none"/><path d="M109.0 18.5 L114.0 0.5 L217.0 0.5 L212.0 18.5" stroke="#8a8a8a" fill="none"/><path d="M212.0 18.5 L217.0 0.5 L475.0 0.5 L470.0 18.5" stroke="#8a8a8a" fill="none"/><path d="M470.0 18.5 L475.0 0.5 L592.0 0.5 L587.0 18.5" stroke="#8a8a8a" fill="none"/><path d="M587.0 18.5 L592.0 0.5 L775.0 0.5 L770.0 18.5" stroke="#8a8a8a" fill="none"/></svg>
<div class="t" style="left:360.40px;top:879.44px;font-size:12.00px;transform:scaleX(0.9849);">Main: Certificates</div>
<div class="t" style="left:462.30px;top:879.44px;font-size:12.00px;transform:scaleX(0.9297);">subEvents: Events</div>
<div class="t" style="left:565.30px;top:879.44px;font-size:12.00px;transform:scaleX(0.9823);">subCalibrationTestPoints: CalibrationTestPoints</div>
<div class="t" style="left:824.40px;top:879.44px;font-size:12.00px;transform:scaleX(0.9518);">subMasters: Masters</div>
<div class="t" style="left:940.80px;top:879.44px;font-size:12.00px;transform:scaleX(0.9619);">subProcedures: EventProcedures</div>
<div class="a" style="left:1195px;top:134px;width:183px;height:761px;background:#f0f0f0;"></div>
<div class="a" style="left:1196px;top:134px;width:177px;height:21px;background:#eeeeee;"></div>
<div class="t" style="left:1201.50px;top:139.24px;font-size:12.00px;transform:scaleX(0.9014);">Data Tree</div>
<svg class="a" style="left:1357px;top:141px;" width="10" height="10" viewBox="0 0 10 10"><path d="M1 1 L9 9 M9 1 L1 9" stroke="#111" stroke-width="1.5"/></svg>
<div class="a" style="left:1196px;top:155px;width:161px;height:132px;background:#ffffff;"></div>
<div class="a" style="left:1357px;top:155px;width:16px;height:132px;background:#f7f7f7;"></div>
<div class="a" style="left:1363.5px;top:174px;width:2px;height:57px;background:#7a7a7a;"></div>
<div class="a" style="left:1217px;top:157px;width:81px;height:16px;background:#d4d4d4;"></div>
<div class="a" style="left:1208px;top:166px;width:1px;height:72px;background:repeating-linear-gradient(#777 0 1px,transparent 1px 2px);"></div>
<div class="a" style="left:1208px;top:250px;width:1px;height:32px;background:repeating-linear-gradient(#777 0 1px,transparent 1px 2px);"></div>
<div class="a" style="left:1209px;top:165px;width:11px;height:1px;background:repeating-linear-gradient(90deg,#777 0 1px,transparent 1px 2px);"></div>
<svg class="a" style="left:1221px;top:159px;" width="13" height="13" viewBox="0 0 13 13"><rect x="0.5" y="0.5" width="12" height="12" fill="#eef2fb" stroke="#3a4f8f"/><rect x="0.5" y="0.5" width="12" height="2.5" fill="#6a84c0"/><path d="M2 5.5 H11 M2 8 H11 M2 10.5 H11 M4.5 3 V12 M8.5 3 V12" stroke="#8ea2cf" stroke-width="0.9"/></svg>
<div class="t" style="left:1239.80px;top:159.54px;font-size:12.00px;transform:scaleX(0.9081);">Certificates</div>
<div class="a" style="left:1209px;top:181px;width:11px;height:1px;background:repeating-linear-gradient(90deg,#777 0 1px,transparent 1px 2px);"></div>
<svg class="a" style="left:1221px;top:175px;" width="13" height="13" viewBox="0 0 13 13"><rect x="0.5" y="0.5" width="12" height="12" fill="#eef2fb" stroke="#3a4f8f"/><rect x="0.5" y="0.5" width="12" height="2.5" fill="#6a84c0"/><path d="M2 5.5 H11 M2 8 H11 M2 10.5 H11 M4.5 3 V12 M8.5 3 V12" stroke="#8ea2cf" stroke-width="0.9"/></svg>
<div class="t" style="left:1239.80px;top:175.54px;font-size:12.00px;transform:scaleX(0.8805);">Events</div>
<div class="a" style="left:1209px;top:197px;width:11px;height:1px;background:repeating-linear-gradient(90deg,#777 0 1px,transparent 1px 2px);"></div>
<svg class="a" style="left:1221px;top:191px;" width="13" height="13" viewBox="0 0 13 13"><rect x="0.5" y="0.5" width="12" height="12" fill="#eef2fb" stroke="#3a4f8f"/><rect x="0.5" y="0.5" width="12" height="2.5" fill="#6a84c0"/><path d="M2 5.5 H11 M2 8 H11 M2 10.5 H11 M4.5 3 V12 M8.5 3 V12" stroke="#8ea2cf" stroke-width="0.9"/></svg>
<div class="t" style="left:1239.80px;top:191.54px;font-size:12.00px;transform:scaleX(0.8528);">ExcelSinglePoint</div>
<div class="a" style="left:1209px;top:213px;width:11px;height:1px;background:repeating-linear-gradient(90deg,#777 0 1px,transparent 1px 2px);"></div>
<svg class="a" style="left:1221px;top:207px;" width="13" height="13" viewBox="0 0 13 13"><rect x="0.5" y="0.5" width="12" height="12" fill="#eef2fb" stroke="#3a4f8f"/><rect x="0.5" y="0.5" width="12" height="2.5" fill="#6a84c0"/><path d="M2 5.5 H11 M2 8 H11 M2 10.5 H11 M4.5 3 V12 M8.5 3 V12" stroke="#8ea2cf" stroke-width="0.9"/></svg>
<div class="t" style="left:1239.80px;top:207.54px;font-size:12.00px;transform:scaleX(0.8533);">ExcelPoints</div>
<div class="a" style="left:1209px;top:229px;width:11px;height:1px;background:repeating-linear-gradient(90deg,#777 0 1px,transparent 1px 2px);"></div>
<svg class="a" style="left:1221px;top:223px;" width="13" height="13" viewBox="0 0 13 13"><rect x="0.5" y="0.5" width="12" height="12" fill="#eef2fb" stroke="#3a4f8f"/><rect x="0.5" y="0.5" width="12" height="2.5" fill="#6a84c0"/><path d="M2 5.5 H11 M2 8 H11 M2 10.5 H11 M4.5 3 V12 M8.5 3 V12" stroke="#8ea2cf" stroke-width="0.9"/></svg>
<div class="t" style="left:1239.80px;top:223.54px;font-size:12.00px;transform:scaleX(0.8858);">Masters</div>
<div class="a" style="left:1213px;top:245px;width:7px;height:1px;background:repeating-linear-gradient(90deg,#777 0 1px,transparent 1px 2px);"></div>
<svg class="a" style="left:1221px;top:239px;" width="13" height="13" viewBox="0 0 13 13"><rect x="0.5" y="0.5" width="12" height="12" fill="#eef2fb" stroke="#3a4f8f"/><rect x="0.5" y="0.5" width="12" height="2.5" fill="#6a84c0"/><path d="M2 5.5 H11 M2 8 H11 M2 10.5 H11 M4.5 3 V12 M8.5 3 V12" stroke="#8ea2cf" stroke-width="0.9"/></svg>
<div class="t" style="left:1239.80px;top:239.54px;font-size:12.00px;transform:scaleX(0.8951);">CalibrationTestPoints</div>
<svg class="a" style="left:1203px;top:243px;" width="9" height="6" viewBox="0 0 9 6"><path d="M1 1 L4.5 4.5 L8 1" stroke="#222" stroke-width="1.4" fill="none"/></svg>
<div class="a" style="left:1227px;top:253px;width:1px;height:9px;background:repeating-linear-gradient(#777 0 1px,transparent 1px 2px);"></div>
<div class="a" style="left:1228px;top:261px;width:12px;height:1px;background:repeating-linear-gradient(90deg,#777 0 1px,transparent 1px 2px);"></div>
<svg class="a" style="left:1241px;top:255px;" width="13" height="13" viewBox="0 0 13 13"><rect x="0.5" y="0.5" width="12" height="12" fill="#eef2fb" stroke="#3a4f8f"/><rect x="0.5" y="0.5" width="12" height="2.5" fill="#6a84c0"/><path d="M2 5.5 H11 M2 8 H11 M2 10.5 H11 M4.5 3 V12 M8.5 3 V12" stroke="#8ea2cf" stroke-width="0.9"/></svg>
<div class="a" style="left:1259px;top:253px;width:98px;height:16px;overflow:hidden"><div class="t" style="left:0.30px;top:2.54px;font-size:12.00px;transform:scaleX(0.9000);">CalibrationTestPoints</div></div>
<div class="a" style="left:1209px;top:277px;width:11px;height:1px;background:repeating-linear-gradient(90deg,#777 0 1px,transparent 1px 2px);"></div>
<svg class="a" style="left:1221px;top:271px;" width="13" height="13" viewBox="0 0 13 13"><rect x="0.5" y="0.5" width="12" height="12" fill="#eef2fb" stroke="#3a4f8f"/><rect x="0.5" y="0.5" width="12" height="2.5" fill="#6a84c0"/><path d="M2 5.5 H11 M2 8 H11 M2 10.5 H11 M4.5 3 V12 M8.5 3 V12" stroke="#8ea2cf" stroke-width="0.9"/></svg>
<div class="t" style="left:1239.80px;top:271.54px;font-size:12.00px;transform:scaleX(0.8733);">SignOffs</div>
<div class="a" style="left:1196px;top:287px;width:177px;height:16px;background:#eeeeee;"></div>
<div class="a" style="left:1214px;top:294px;width:104px;height:2px;background:#7e7e7e;"></div>
<div class="a" style="left:1196px;top:303px;width:177px;height:2px;background:#fafafa;"></div>
<div class="a" style="left:1196px;top:305px;width:177px;height:22px;background:#eeeeee;"></div>
<div class="t" style="left:1200.60px;top:311.54px;font-size:12.00px;transform:scaleX(0.8997);">Fields for Certificates</div>
<div class="a" style="left:1196px;top:327px;width:177px;height:528px;background:#ffffff;"></div>
<div class="t" style="left:1202.50px;top:333.34px;font-size:12.00px;transform:scaleX(0.8747);">Name</div>
<div class="a" style="left:1326px;top:328px;width:1px;height:22px;background:#e4e4e4;"></div>
<div class="t" style="left:1333.00px;top:333.34px;font-size:12.00px;transform:scaleX(0.9225);">Type</div>
<div class="a" style="left:1214px;top:385px;width:111px;height:17px;background:#d8d8d8;"></div>
<svg class="a" style="left:1201px;top:352px;" width="16" height="15" viewBox="0 0 16 15"><rect x="0.5" y="0.5" width="12" height="12" fill="#f4f6fb" stroke="#3a4f8f"/><rect x="0.5" y="0.5" width="12" height="2.5" fill="#5a74b8"/><path d="M2 5 H11 M2 7.5 H5 M2 10 H5" stroke="#6a7fb8"/><rect x="6.5" y="6.5" width="8.5" height="8" fill="#dfe8f6" stroke="#3a4f8f"/><rect x="8.5" y="8.5" width="4.5" height="4" fill="#6a94d0"/></svg>
<div class="t" style="left:1218.60px;top:355.54px;font-size:12.00px;transform:scaleX(0.8942);">Cert. Number</div>
<div class="t" style="left:1333.00px;top:355.54px;font-size:12.00px;transform:scaleX(0.8741);">String</div>
<svg class="a" style="left:1201px;top:369px;" width="16" height="15" viewBox="0 0 16 15"><rect x="0.5" y="0.5" width="12" height="12" fill="#f4f6fb" stroke="#3a4f8f"/><rect x="0.5" y="0.5" width="12" height="2.5" fill="#5a74b8"/><path d="M2 5 H11 M2 7.5 H5 M2 10 H5" stroke="#6a7fb8"/><rect x="6.5" y="6.5" width="8.5" height="8" fill="#dfe8f6" stroke="#3a4f8f"/><rect x="8.5" y="8.5" width="4.5" height="4" fill="#6a94d0"/></svg>
<div class="t" style="left:1218.60px;top:372.54px;font-size:12.00px;transform:scaleX(0.8952);">Certificate Comment</div>
<div class="t" style="left:1333.00px;top:372.54px;font-size:12.00px;transform:scaleX(0.8741);">String</div>
<svg class="a" style="left:1201px;top:386px;" width="16" height="15" viewBox="0 0 16 15"><rect x="0.5" y="0.5" width="12" height="12" fill="#f4f6fb" stroke="#3a4f8f"/><rect x="0.5" y="0.5" width="12" height="2.5" fill="#5a74b8"/><path d="M2 5 H11 M2 7.5 H5 M2 10 H5" stroke="#6a7fb8"/><rect x="6.5" y="6.5" width="8.5" height="8" fill="#dfe8f6" stroke="#3a4f8f"/><rect x="8.5" y="8.5" width="4.5" height="4" fill="#6a94d0"/></svg>
<div class="t" style="left:1218.60px;top:389.54px;font-size:12.00px;transform:scaleX(0.9166);">Certificate Date</div>
<div class="a" style="left:1333px;top:386px;width:40px;height:17px;overflow:hidden"><div class="t" style="left:0.00px;top:3.54px;font-size:12.00px;transform:scaleX(0.9000);">DateTime</div></div>
<svg class="a" style="left:1201px;top:403px;" width="16" height="15" viewBox="0 0 16 15"><rect x="0.5" y="0.5" width="12" height="12" fill="#f4f6fb" stroke="#3a4f8f"/><rect x="0.5" y="0.5" width="12" height="2.5" fill="#5a74b8"/><path d="M2 5 H11 M2 7.5 H5 M2 10 H5" stroke="#6a7fb8"/><rect x="6.5" y="6.5" width="8.5" height="8" fill="#dfe8f6" stroke="#3a4f8f"/><rect x="8.5" y="8.5" width="4.5" height="4" fill="#6a94d0"/></svg>
<div class="t" style="left:1218.60px;top:406.54px;font-size:12.00px;transform:scaleX(0.8926);">Certificate Time</div>
<div class="t" style="left:1333.00px;top:406.54px;font-size:12.00px;transform:scaleX(0.8009);">Time</div>
<svg class="a" style="left:1201px;top:420px;" width="16" height="15" viewBox="0 0 16 15"><rect x="0.5" y="0.5" width="12" height="12" fill="#f4f6fb" stroke="#3a4f8f"/><rect x="0.5" y="0.5" width="12" height="2.5" fill="#5a74b8"/><path d="M2 5 H11 M2 7.5 H5 M2 10 H5" stroke="#6a7fb8"/><rect x="6.5" y="6.5" width="8.5" height="8" fill="#dfe8f6" stroke="#3a4f8f"/><rect x="8.5" y="8.5" width="4.5" height="4" fill="#6a94d0"/></svg>
<div class="t" style="left:1218.60px;top:423.54px;font-size:12.00px;transform:scaleX(0.9085);">Rev. Level</div>
<div class="t" style="left:1333.00px;top:423.54px;font-size:12.00px;transform:scaleX(0.9368);">Integer</div>
<svg class="a" style="left:1201px;top:437px;" width="16" height="15" viewBox="0 0 16 15"><rect x="0.5" y="0.5" width="12" height="12" fill="#f4f6fb" stroke="#3a4f8f"/><rect x="0.5" y="0.5" width="12" height="2.5" fill="#5a74b8"/><path d="M2 5 H11 M2 7.5 H5 M2 10 H5" stroke="#6a7fb8"/><rect x="6.5" y="6.5" width="8.5" height="8" fill="#dfe8f6" stroke="#3a4f8f"/><rect x="8.5" y="8.5" width="4.5" height="4" fill="#6a94d0"/></svg>
<div class="t" style="left:1218.60px;top:440.54px;font-size:12.00px;transform:scaleX(0.8782);">Vendor</div>
<div class="t" style="left:1333.00px;top:440.54px;font-size:12.00px;transform:scaleX(0.8741);">String</div>
<div class="a" style="left:1372px;top:134px;width:1px;height:761px;background:#e6e6e6;"></div>
<div class="a" style="left:1196px;top:855px;width:177px;height:16px;background:#eeeeee;"></div>
<div class="a" style="left:1214px;top:862px;width:106px;height:2px;background:#7e7e7e;"></div>
<div class="a" style="left:1197px;top:871px;width:176px;height:23px;background:#ffffff;border:1px solid #bdbdbd;border-top:2px solid #111;box-sizing:border-box;"></div>
<svg class="a" style="left:1205px;top:871px;" width="31" height="20" viewBox="0 0 31 20"><path d="M1 0 V18 H29 V0" stroke="#111" stroke-width="2" fill="#f0f0f0"/></svg>
<div class="t" style="left:1211.00px;top:877.88px;font-size:11.00px;transform:scaleX(0.8392);">Data</div>
<div class="t" style="left:1242.00px;top:877.88px;font-size:11.00px;transform:scaleX(0.8024);">Layout</div>
<div class="a" style="left:1272px;top:874px;width:1px;height:15px;background:#888;"></div>
<div class="a" style="left:0px;top:895px;width:1378px;height:27px;background:#f0f0f0;"></div>
<div class="a" style="left:0px;top:920px;width:1378px;height:1px;background:#c4c4c4;"></div>
<div class="a" style="left:0px;top:921px;width:1378px;height:1px;background:#8a8a8a;"></div>
<div class="t" style="left:1.00px;top:906.04px;font-size:12.00px;transform:scaleX(0.8887);">Ready.</div>
<div class="a" style="left:804px;top:900px;width:1px;height:20px;background:#c8c8c8;"></div>
<div class="a" style="left:894px;top:900px;width:1px;height:20px;background:#c8c8c8;"></div>
<div class="a" style="left:984px;top:900px;width:1px;height:20px;background:#c8c8c8;"></div>
<div class="a" style="left:1074px;top:900px;width:1px;height:20px;background:#c8c8c8;"></div>
<div class="a" style="left:1164px;top:900px;width:1px;height:20px;background:#c8c8c8;"></div>
<div class="t" style="left:808.50px;top:905.54px;font-size:12.00px;transform:scaleX(0.9593);">Left: 0</div>
<div class="t" style="left:898.60px;top:905.54px;font-size:12.00px;transform:scaleX(0.9483);">Top: 0</div>
<div class="t" style="left:988.50px;top:905.54px;font-size:12.00px;transform:scaleX(0.9315);">Width: 0</div>
<div class="t" style="left:1078.50px;top:905.54px;font-size:12.00px;transform:scaleX(0.9265);">Height: 0</div>
<div class="t" style="left:1170.00px;top:905.54px;font-size:12.00px;transform:scaleX(0.8797);">100%</div>
<div class="a" style="left:1214px;top:907px;width:138px;height:9px;background:#e6e6e6;border:1px solid #d8d8d8;box-sizing:border-box;"></div>
<svg class="a" style="left:1228px;top:904px;" width="9" height="12" viewBox="0 0 9 12"><path d="M0.5 3 L4.5 0.5 L8.5 3 V11.5 H0.5 Z" fill="#0a6fd8"/></svg>
<svg class="a" style="left:1365px;top:909px;" width="12" height="12" viewBox="0 0 12 12"><path d="M11 2 L2 11 M11 6 L6 11" stroke="#8a8a8a" stroke-width="1.2"/></svg>
</body></html>
